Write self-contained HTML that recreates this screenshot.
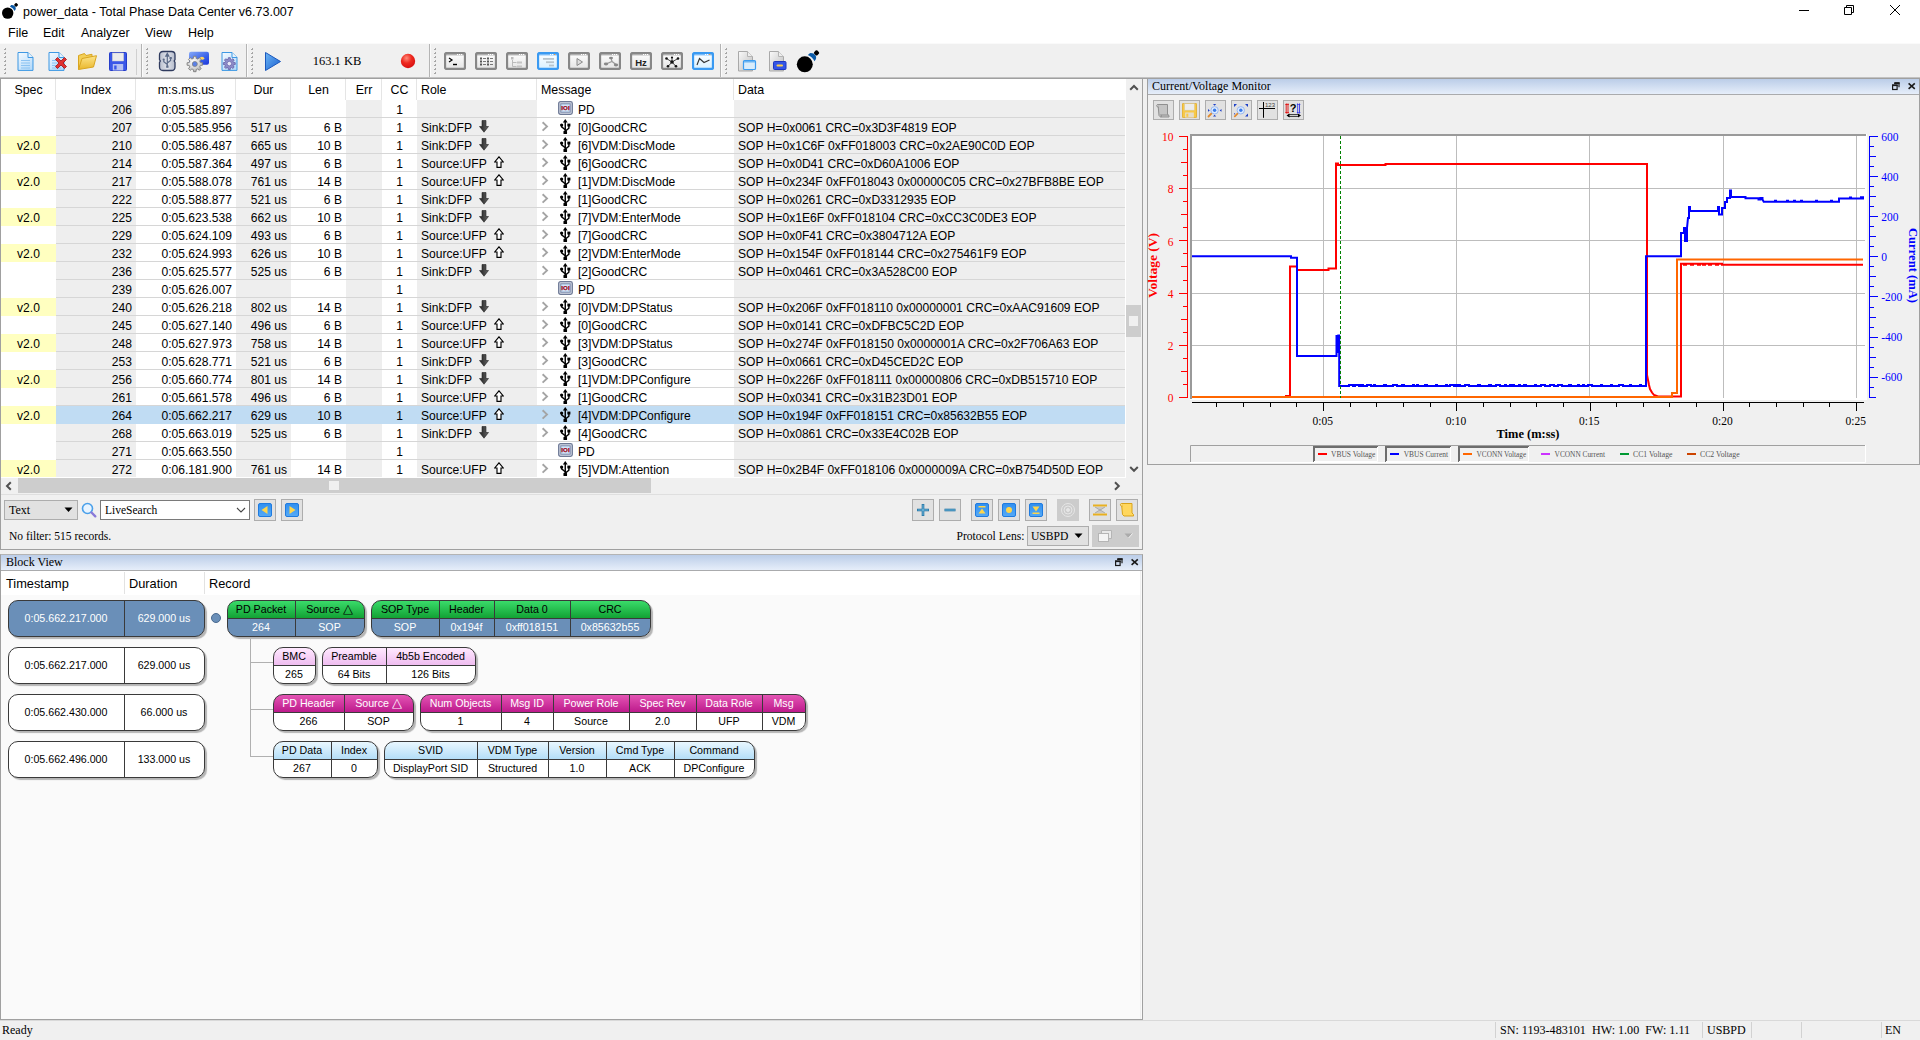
<!DOCTYPE html><html><head><meta charset="utf-8"><title>power_data - Total Phase Data Center v6.73.007</title><style>
html,body{margin:0;padding:0}
body{width:1920px;height:1040px;background:#f0f0f0;position:relative;overflow:hidden;font-family:"Liberation Sans",sans-serif;font-size:12px;color:#000}
div,span,svg{position:absolute;box-sizing:border-box}
.ui{font-family:"Liberation Sans",sans-serif;font-size:12.5px;white-space:nowrap}
.sf{font-family:"Liberation Serif",serif;font-size:12px;white-space:nowrap}
.t{white-space:nowrap;line-height:18px;height:18px;font-size:12.08px;margin-top:1px}
.r{text-align:right}
.c{text-align:center}
.hd{white-space:nowrap;line-height:20px;height:20px;font-size:12.4px;top:80px}
.hs{top:79px;width:1px;height:21px;background:#e5e5e5}
.ln{height:1px;background:#d6d6d6;left:56px;width:1069px}
.bk{font-size:10.67px;white-space:nowrap;text-align:center;line-height:17px;height:18px}
.btn{border:1px solid #adadad;background:#e1e1e1}
</style></head><body><div style="left:0;top:0;width:1920px;height:43px;background:#fff"></div><svg style="left:0px;top:0px" width="20.0" height="22.0" viewBox="0 0 20 22"><path d="M9.900 6.400L11.300 5.100Q14 4.800 15.400 6.800Q16.600 8.800 14.600 10.900Q13.500 8 9.900 6.400Z" fill="#0a5aa8"/><rect x="14.500" y="3.300" width="3.200" height="3.200" rx=".9" transform="rotate(45 16.100 4.900)" fill="#000"/><circle cx="7.700" cy="13.100" r="5.700" fill="#000"/></svg><div class="ui" style="left:23px;top:4px;line-height:16px">power_data - Total Phase Data Center v6.73.007</div><svg style="left:1795px;top:0" width="120" height="22" viewBox="0 0 120 22" fill="none" stroke="#000" stroke-width="1"><path d="M4 10.5h10"/><path d="M49.5 7.5h7v7h-7z M51.5 7.5v-2h7v7h-2"/><path d="M95 5l10 10M105 5l-10 10"/></svg><div class="ui" style="left:8px;top:25px;line-height:16px">File</div><div class="ui" style="left:43px;top:25px;line-height:16px">Edit</div><div class="ui" style="left:81px;top:25px;line-height:16px">Analyzer</div><div class="ui" style="left:145px;top:25px;line-height:16px">View</div><div class="ui" style="left:188px;top:25px;line-height:16px">Help</div><div style="left:0;top:43px;width:1920px;height:34px;background:#f0f0f0;border-top:1px solid #fafafa"></div><div style="left:0;top:77px;width:1920px;height:1px;background:#c2c2c2"></div><div style="left:0;top:78px;width:1920px;height:1px;background:#a0a0a0"></div><div style="left:4px;top:48px;width:2px;height:2px;background:#a6a6a6"></div><div style="left:4px;top:48px;width:1px;height:1px;background:#f6f6f6"></div><div style="left:4px;top:52px;width:2px;height:2px;background:#a6a6a6"></div><div style="left:4px;top:52px;width:1px;height:1px;background:#f6f6f6"></div><div style="left:4px;top:56px;width:2px;height:2px;background:#a6a6a6"></div><div style="left:4px;top:56px;width:1px;height:1px;background:#f6f6f6"></div><div style="left:4px;top:60px;width:2px;height:2px;background:#a6a6a6"></div><div style="left:4px;top:60px;width:1px;height:1px;background:#f6f6f6"></div><div style="left:4px;top:64px;width:2px;height:2px;background:#a6a6a6"></div><div style="left:4px;top:64px;width:1px;height:1px;background:#f6f6f6"></div><div style="left:4px;top:68px;width:2px;height:2px;background:#a6a6a6"></div><div style="left:4px;top:68px;width:1px;height:1px;background:#f6f6f6"></div><div style="left:4px;top:72px;width:2px;height:2px;background:#a6a6a6"></div><div style="left:4px;top:72px;width:1px;height:1px;background:#f6f6f6"></div><div style="left:146px;top:48px;width:2px;height:2px;background:#a6a6a6"></div><div style="left:146px;top:48px;width:1px;height:1px;background:#f6f6f6"></div><div style="left:146px;top:52px;width:2px;height:2px;background:#a6a6a6"></div><div style="left:146px;top:52px;width:1px;height:1px;background:#f6f6f6"></div><div style="left:146px;top:56px;width:2px;height:2px;background:#a6a6a6"></div><div style="left:146px;top:56px;width:1px;height:1px;background:#f6f6f6"></div><div style="left:146px;top:60px;width:2px;height:2px;background:#a6a6a6"></div><div style="left:146px;top:60px;width:1px;height:1px;background:#f6f6f6"></div><div style="left:146px;top:64px;width:2px;height:2px;background:#a6a6a6"></div><div style="left:146px;top:64px;width:1px;height:1px;background:#f6f6f6"></div><div style="left:146px;top:68px;width:2px;height:2px;background:#a6a6a6"></div><div style="left:146px;top:68px;width:1px;height:1px;background:#f6f6f6"></div><div style="left:146px;top:72px;width:2px;height:2px;background:#a6a6a6"></div><div style="left:146px;top:72px;width:1px;height:1px;background:#f6f6f6"></div><div style="left:251px;top:48px;width:2px;height:2px;background:#a6a6a6"></div><div style="left:251px;top:48px;width:1px;height:1px;background:#f6f6f6"></div><div style="left:251px;top:52px;width:2px;height:2px;background:#a6a6a6"></div><div style="left:251px;top:52px;width:1px;height:1px;background:#f6f6f6"></div><div style="left:251px;top:56px;width:2px;height:2px;background:#a6a6a6"></div><div style="left:251px;top:56px;width:1px;height:1px;background:#f6f6f6"></div><div style="left:251px;top:60px;width:2px;height:2px;background:#a6a6a6"></div><div style="left:251px;top:60px;width:1px;height:1px;background:#f6f6f6"></div><div style="left:251px;top:64px;width:2px;height:2px;background:#a6a6a6"></div><div style="left:251px;top:64px;width:1px;height:1px;background:#f6f6f6"></div><div style="left:251px;top:68px;width:2px;height:2px;background:#a6a6a6"></div><div style="left:251px;top:68px;width:1px;height:1px;background:#f6f6f6"></div><div style="left:251px;top:72px;width:2px;height:2px;background:#a6a6a6"></div><div style="left:251px;top:72px;width:1px;height:1px;background:#f6f6f6"></div><div style="left:434px;top:48px;width:2px;height:2px;background:#a6a6a6"></div><div style="left:434px;top:48px;width:1px;height:1px;background:#f6f6f6"></div><div style="left:434px;top:52px;width:2px;height:2px;background:#a6a6a6"></div><div style="left:434px;top:52px;width:1px;height:1px;background:#f6f6f6"></div><div style="left:434px;top:56px;width:2px;height:2px;background:#a6a6a6"></div><div style="left:434px;top:56px;width:1px;height:1px;background:#f6f6f6"></div><div style="left:434px;top:60px;width:2px;height:2px;background:#a6a6a6"></div><div style="left:434px;top:60px;width:1px;height:1px;background:#f6f6f6"></div><div style="left:434px;top:64px;width:2px;height:2px;background:#a6a6a6"></div><div style="left:434px;top:64px;width:1px;height:1px;background:#f6f6f6"></div><div style="left:434px;top:68px;width:2px;height:2px;background:#a6a6a6"></div><div style="left:434px;top:68px;width:1px;height:1px;background:#f6f6f6"></div><div style="left:434px;top:72px;width:2px;height:2px;background:#a6a6a6"></div><div style="left:434px;top:72px;width:1px;height:1px;background:#f6f6f6"></div><div style="left:725px;top:48px;width:2px;height:2px;background:#a6a6a6"></div><div style="left:725px;top:48px;width:1px;height:1px;background:#f6f6f6"></div><div style="left:725px;top:52px;width:2px;height:2px;background:#a6a6a6"></div><div style="left:725px;top:52px;width:1px;height:1px;background:#f6f6f6"></div><div style="left:725px;top:56px;width:2px;height:2px;background:#a6a6a6"></div><div style="left:725px;top:56px;width:1px;height:1px;background:#f6f6f6"></div><div style="left:725px;top:60px;width:2px;height:2px;background:#a6a6a6"></div><div style="left:725px;top:60px;width:1px;height:1px;background:#f6f6f6"></div><div style="left:725px;top:64px;width:2px;height:2px;background:#a6a6a6"></div><div style="left:725px;top:64px;width:1px;height:1px;background:#f6f6f6"></div><div style="left:725px;top:68px;width:2px;height:2px;background:#a6a6a6"></div><div style="left:725px;top:68px;width:1px;height:1px;background:#f6f6f6"></div><div style="left:725px;top:72px;width:2px;height:2px;background:#a6a6a6"></div><div style="left:725px;top:72px;width:1px;height:1px;background:#f6f6f6"></div><div style="left:141px;top:44px;width:1px;height:33px;background:#b4b4b4"></div><div style="left:142px;top:44px;width:1px;height:33px;background:#fbfbfb"></div><div style="left:246px;top:44px;width:1px;height:33px;background:#b4b4b4"></div><div style="left:247px;top:44px;width:1px;height:33px;background:#fbfbfb"></div><div style="left:429px;top:44px;width:1px;height:33px;background:#b4b4b4"></div><div style="left:430px;top:44px;width:1px;height:33px;background:#fbfbfb"></div><div style="left:720px;top:44px;width:1px;height:33px;background:#b4b4b4"></div><div style="left:721px;top:44px;width:1px;height:33px;background:#fbfbfb"></div><div style="left:136px;top:49px;width:1px;height:26px;background:#d0d0d0"></div><svg style="left:17px;top:52px" width="17" height="19.4" viewBox="0 0 17 19.4"><defs><linearGradient id="d1" x1="0" y1="0" x2="0.6" y2="1"><stop offset="0" stop-color="#f4faff"/><stop offset="1" stop-color="#b9dcfa"/></linearGradient></defs><path d="M1 .5h10l5 5v12.899999999999999h-15z" fill="url(#d1)" stroke="#3b97e3" stroke-width="1"/><path d="M11 .5v5h5" fill="#e8f3fd" stroke="#3b97e3" stroke-width="1"/><path d="M4 8.5h9" stroke="#8cc3f2" stroke-width="1"/><path d="M4 11.0h9" stroke="#8cc3f2" stroke-width="1"/><path d="M4 13.5h9" stroke="#8cc3f2" stroke-width="1"/><path d="M4 16.0h9" stroke="#8cc3f2" stroke-width="1"/></svg><svg style="left:48px;top:52px" width="17" height="19.4" viewBox="0 0 17 19.4"><defs><linearGradient id="d2" x1="0" y1="0" x2="0.6" y2="1"><stop offset="0" stop-color="#f4faff"/><stop offset="1" stop-color="#b9dcfa"/></linearGradient></defs><path d="M1 .5h10l5 5v12.899999999999999h-15z" fill="url(#d2)" stroke="#3b97e3" stroke-width="1"/><path d="M11 .5v5h5" fill="#e8f3fd" stroke="#3b97e3" stroke-width="1"/><path d="M4 8.5h9" stroke="#8cc3f2" stroke-width="1"/><path d="M4 11.0h9" stroke="#8cc3f2" stroke-width="1"/><path d="M4 13.5h9" stroke="#8cc3f2" stroke-width="1"/><path d="M4 16.0h9" stroke="#8cc3f2" stroke-width="1"/></svg><svg style="left:53.300px;top:55px" width="16" height="16" viewBox="0 0 16 16"><path d="M2.5 4.5l2-2L8 6l3.5-3.5 2 2L10 8l3.500 3.500-2 2L8 10l-3.500 3.500-2-2L6 8z" fill="#e03030" stroke="#a01010" stroke-width=".8"/></svg><svg style="left:77px;top:51px" width="21" height="21" viewBox="0 0 21 21"><defs><linearGradient id="fo" x1="0" y1="0" x2="0" y2="1"><stop offset="0" stop-color="#fde58a"/><stop offset="1" stop-color="#e9b62c"/></linearGradient></defs><path d="M1.500 18.500V4.500l6-2 1.500 2 6-1.200v3" fill="#f3cf57" stroke="#d9a520" stroke-width="1"/><path d="M1.500 18.500L5 7.500l14.500-2.800L16.500 16z" fill="url(#fo)" stroke="#d9a520" stroke-width="1"/></svg><svg style="left:109px;top:52px" width="18" height="19" viewBox="0 0 19 19" preserveAspectRatio="none"><rect x=".5" y=".5" width="18" height="18" rx="1" fill="#3a57e8" stroke="#2038c8" stroke-width="1"/><rect x="3.500" y="1" width="12" height="8" fill="#ececec" stroke="#c9c9c9" stroke-width=".5"/><rect x="4" y="12" width="11" height="6.500" fill="#dfe3f5" opacity=".75"/><rect x="5.500" y="13.500" width="2.500" height="4" fill="#3a57e8"/></svg><svg style="left:157.500px;top:50px" width="20" height="22" viewBox="0 0 20 22"><defs><linearGradient id="ud" x1="0" y1="0" x2="1" y2="0"><stop offset="0" stop-color="#b9bfce"/><stop offset=".5" stop-color="#dfe2ea"/><stop offset="1" stop-color="#b4bbcb"/></linearGradient></defs><path d="M5 1.500h8.500q3.500 0 3.500 3.500v4.500l-.8 1.500.8 1.500v4.500q0 3.500-3.500 3.500H5q-3.500 0-3.500-3.500v-4.500l.8-1.500-.8-1.500V5q0-3.500 3.500-3.500z" fill="url(#ud)" stroke="#2f3b5e" stroke-width="1.300"/><path d="M9.300 4.500v12M9.300 3.300l-1.500 2.800h3zM9.300 14.500l-3.500-2.700v-1.600M9.300 13l3.300-2.600V8.700" fill="none" stroke="#5c6b88" stroke-width="1.200"/><circle cx="5.700" cy="9.600" r="1.100" fill="#5c6b88"/><rect x="11.500" y="7" width="2.300" height="2" fill="#5c6b88"/><rect x="8.200" y="15.500" width="2.300" height="2.300" fill="#5c6b88"/></svg><svg style="left:186px;top:50px" width="25" height="24" viewBox="0 0 25 24"><defs><linearGradient id="mo" x1="0" y1="0" x2="1" y2="1"><stop offset="0" stop-color="#86a9f7"/><stop offset=".6" stop-color="#3a62ea"/><stop offset="1" stop-color="#1c36d8"/></linearGradient><radialGradient id="gg" cx=".4" cy=".35" r=".75"><stop offset="0" stop-color="#ffffff"/><stop offset=".6" stop-color="#d2d2d2"/><stop offset="1" stop-color="#9c9c9c"/></radialGradient></defs><rect x="3" y="1.800" width="20" height="13" rx="2" fill="url(#mo)"/><ellipse cx="16" cy="8.300" rx="2.200" ry="1.500" fill="#ffd45e"/><path d="M7.37 8.41 L7.56 6.30 L10.04 6.30 L10.23 8.41 L11.74 9.04 L13.37 7.68 L15.12 9.43 L13.76 11.06 L14.39 12.57 L16.50 12.76 L16.50 15.24 L14.39 15.43 L13.76 16.94 L15.12 18.57 L13.37 20.32 L11.74 18.96 L10.23 19.59 L10.04 21.70 L7.56 21.70 L7.37 19.59 L5.86 18.96 L4.23 20.32 L2.48 18.57 L3.84 16.94 L3.21 15.43 L1.10 15.24 L1.10 12.76 L3.21 12.57 L3.84 11.06 L2.48 9.43 L4.23 7.68 L5.86 9.04Z" fill="url(#gg)" stroke="#7f7f7f" stroke-width=".9" stroke-linejoin="round"/><circle cx="8.8" cy="14" r="2.5" fill="#5a80e8" stroke="#7f7f7f" stroke-width=".8"/></svg><svg style="left:221px;top:52px" width="17" height="19.4" viewBox="0 0 17 19.4"><defs><linearGradient id="d3" x1="0" y1="0" x2="0.6" y2="1"><stop offset="0" stop-color="#f4faff"/><stop offset="1" stop-color="#b9dcfa"/></linearGradient></defs><path d="M1 .5h10l5 5v12.899999999999999h-15z" fill="url(#d3)" stroke="#3b97e3" stroke-width="1"/><path d="M11 .5v5h5" fill="#e8f3fd" stroke="#3b97e3" stroke-width="1"/></svg><svg style="left:221px;top:55px" width="17" height="17" viewBox="0 0 17 17"><path d="M7.20 4.30 L7.34 2.68 L9.26 2.68 L9.40 4.30 L10.57 4.78 L11.81 3.74 L13.16 5.09 L12.12 6.33 L12.60 7.50 L14.22 7.64 L14.22 9.56 L12.60 9.70 L12.12 10.87 L13.16 12.11 L11.81 13.46 L10.57 12.42 L9.40 12.90 L9.26 14.52 L7.34 14.52 L7.20 12.90 L6.03 12.42 L4.79 13.46 L3.44 12.11 L4.48 10.87 L4.00 9.70 L2.38 9.56 L2.38 7.64 L4.00 7.50 L4.48 6.33 L3.44 5.09 L4.79 3.74 L6.03 4.78Z" fill="#8f8cc8" stroke="#6a67ae" stroke-width=".9" stroke-linejoin="round"/><circle cx="8.3" cy="8.6" r="2.3" fill="#e8e8f8" stroke="#6a67ae" stroke-width=".8"/></svg><svg style="left:264px;top:51px" width="18" height="21" viewBox="0 0 18 21"><defs><linearGradient id="pl" x1="0" y1="0" x2="1" y2="1"><stop offset="0" stop-color="#6db6f5"/><stop offset="1" stop-color="#1a5fd0"/></linearGradient></defs><path d="M1.500 1.500L16.500 10.500L1.500 19.500Z" fill="url(#pl)" stroke="#1b58bd" stroke-width="1" stroke-linejoin="round"/></svg><div class="sf" style="left:292px;top:53px;width:90px;text-align:center;line-height:16px;font-size:12.5px">163.1 KB</div><svg style="left:400px;top:53px" width="16" height="16" viewBox="0 0 16 16"><defs><radialGradient id="rc" cx=".4" cy=".3" r=".7"><stop offset="0" stop-color="#ff8a7a"/><stop offset=".5" stop-color="#ee2a20"/><stop offset="1" stop-color="#d81010"/></radialGradient></defs><circle cx="8" cy="8" r="7.200" fill="url(#rc)"/></svg><svg style="left:444px;top:52px" width="22" height="18" viewBox="0 0 22 18"><defs><linearGradient id="w1" x1="0" y1="0" x2="0" y2="1"><stop offset="0" stop-color="#ffffff"/><stop offset="1" stop-color="#e4e4e4"/></linearGradient></defs><rect x="1" y="1" width="20" height="16" rx="1.800" fill="url(#w1)" stroke="#878787" stroke-width="2.300"/><rect x="2" y="2" width="18" height="1.500" fill="#878787" opacity=".55"/><rect x="13" y="2" width="1.200" height="1" fill="#fff"/><rect x="15" y="2" width="1.200" height="1" fill="#fff"/><rect x="17" y="2" width="1.200" height="1" fill="#fff"/><path d="M5 6l3 2-3 2" fill="none" stroke="#000" stroke-width="1.200"/><path d="M9 12.500h4" stroke="#000" stroke-width="1.400"/></svg><svg style="left:475px;top:52px" width="22" height="18" viewBox="0 0 22 18"><defs><linearGradient id="w2" x1="0" y1="0" x2="0" y2="1"><stop offset="0" stop-color="#ffffff"/><stop offset="1" stop-color="#e4e4e4"/></linearGradient></defs><rect x="1" y="1" width="20" height="16" rx="1.800" fill="url(#w2)" stroke="#878787" stroke-width="2.300"/><rect x="2" y="2" width="18" height="1.500" fill="#878787" opacity=".55"/><rect x="13" y="2" width="1.200" height="1" fill="#fff"/><rect x="15" y="2" width="1.200" height="1" fill="#fff"/><rect x="17" y="2" width="1.200" height="1" fill="#fff"/><rect x="5" y="5.5" width="2" height="2" fill="#555"/><rect x="8" y="6.0" width="3" height="1" fill="#777"/><rect x="12" y="5.5" width="2" height="2" fill="#555"/><rect x="15" y="6.0" width="3" height="1" fill="#777"/><rect x="5" y="8.5" width="2" height="2" fill="#555"/><rect x="8" y="9.0" width="3" height="1" fill="#777"/><rect x="12" y="8.5" width="2" height="2" fill="#555"/><rect x="15" y="9.0" width="3" height="1" fill="#777"/><rect x="5" y="11.5" width="2" height="2" fill="#555"/><rect x="8" y="12.0" width="3" height="1" fill="#777"/><rect x="12" y="11.5" width="2" height="2" fill="#555"/><rect x="15" y="12.0" width="3" height="1" fill="#777"/></svg><svg style="left:506px;top:52px" width="22" height="18" viewBox="0 0 22 18"><defs><linearGradient id="w3" x1="0" y1="0" x2="0" y2="1"><stop offset="0" stop-color="#ffffff"/><stop offset="1" stop-color="#e4e4e4"/></linearGradient></defs><rect x="1" y="1" width="20" height="16" rx="1.800" fill="url(#w3)" stroke="#878787" stroke-width="2.300"/><rect x="2" y="2" width="18" height="1.500" fill="#878787" opacity=".55"/><rect x="13" y="2" width="1.200" height="1" fill="#fff"/><rect x="15" y="2" width="1.200" height="1" fill="#fff"/><rect x="17" y="2" width="1.200" height="1" fill="#fff"/><rect x="5" y="5" width="2.500" height="2.500" fill="#bbb"/><path d="M6.500 8v6.500h4M6.500 10.500h4" fill="none" stroke="#bbb" stroke-width="1"/><rect x="11" y="9.500" width="5" height="2" fill="#c4c4c4"/><rect x="11" y="13.500" width="5" height="2" fill="#c4c4c4"/></svg><svg style="left:537px;top:52px" width="22" height="18" viewBox="0 0 22 18"><defs><linearGradient id="w4" x1="0" y1="0" x2="0" y2="1"><stop offset="0" stop-color="#ffffff"/><stop offset="1" stop-color="#d8f0ff"/></linearGradient></defs><rect x="1" y="1" width="20" height="16" rx="1.800" fill="url(#w4)" stroke="#3a9af2" stroke-width="2.300"/><rect x="2" y="2" width="18" height="1.500" fill="#3a9af2" opacity=".55"/><rect x="13" y="2" width="1.200" height="1" fill="#fff"/><rect x="15" y="2" width="1.200" height="1" fill="#fff"/><rect x="17" y="2" width="1.200" height="1" fill="#ff9a30"/><rect x="6" y="6" width="11" height="1.800" fill="#b8c4cc"/><rect x="9" y="9.300" width="8" height="1.800" fill="#b8c4cc"/><rect x="12" y="12.600" width="5" height="1.800" fill="#b8c4cc"/></svg><svg style="left:568px;top:52px" width="22" height="18" viewBox="0 0 22 18"><defs><linearGradient id="w5" x1="0" y1="0" x2="0" y2="1"><stop offset="0" stop-color="#ffffff"/><stop offset="1" stop-color="#e4e4e4"/></linearGradient></defs><rect x="1" y="1" width="20" height="16" rx="1.800" fill="url(#w5)" stroke="#878787" stroke-width="2.300"/><rect x="2" y="2" width="18" height="1.500" fill="#878787" opacity=".55"/><rect x="13" y="2" width="1.200" height="1" fill="#fff"/><rect x="15" y="2" width="1.200" height="1" fill="#fff"/><rect x="17" y="2" width="1.200" height="1" fill="#fff"/><path d="M9 6.500l5.500 3.500-5.500 3.500z" fill="#ddd" stroke="#8a8a8a" stroke-width="1"/></svg><svg style="left:599px;top:52px" width="22" height="18" viewBox="0 0 22 18"><defs><linearGradient id="w6" x1="0" y1="0" x2="0" y2="1"><stop offset="0" stop-color="#ffffff"/><stop offset="1" stop-color="#e4e4e4"/></linearGradient></defs><rect x="1" y="1" width="20" height="16" rx="1.800" fill="url(#w6)" stroke="#878787" stroke-width="2.300"/><rect x="2" y="2" width="18" height="1.500" fill="#878787" opacity=".55"/><rect x="13" y="2" width="1.200" height="1" fill="#fff"/><rect x="15" y="2" width="1.200" height="1" fill="#fff"/><rect x="17" y="2" width="1.200" height="1" fill="#fff"/><path d="M7 12l6-2.500 4 3M13 9.500l-1-3.500" fill="none" stroke="#999" stroke-width="1.200"/><ellipse cx="7" cy="12" rx="2.200" ry="1.400" fill="#888"/><ellipse cx="17" cy="13" rx="2.200" ry="1.400" fill="#888"/><ellipse cx="12" cy="6" rx="2" ry="1.300" fill="#888"/></svg><svg style="left:630px;top:52px" width="22" height="18" viewBox="0 0 22 18"><defs><linearGradient id="w7" x1="0" y1="0" x2="0" y2="1"><stop offset="0" stop-color="#ffffff"/><stop offset="1" stop-color="#e4e4e4"/></linearGradient></defs><rect x="1" y="1" width="20" height="16" rx="1.800" fill="url(#w7)" stroke="#878787" stroke-width="2.300"/><rect x="2" y="2" width="18" height="1.500" fill="#878787" opacity=".55"/><rect x="13" y="2" width="1.200" height="1" fill="#fff"/><rect x="15" y="2" width="1.200" height="1" fill="#fff"/><rect x="17" y="2" width="1.200" height="1" fill="#fff"/><text x="11" y="13.500" font-family="Liberation Sans,sans-serif" font-weight="bold" font-size="9.500" text-anchor="middle" fill="#222">Hz</text></svg><svg style="left:661px;top:52px" width="22" height="18" viewBox="0 0 22 18"><defs><linearGradient id="w8" x1="0" y1="0" x2="0" y2="1"><stop offset="0" stop-color="#ffffff"/><stop offset="1" stop-color="#e4e4e4"/></linearGradient></defs><rect x="1" y="1" width="20" height="16" rx="1.800" fill="url(#w8)" stroke="#878787" stroke-width="2.300"/><rect x="2" y="2" width="18" height="1.500" fill="#878787" opacity=".55"/><rect x="13" y="2" width="1.200" height="1" fill="#fff"/><rect x="15" y="2" width="1.200" height="1" fill="#fff"/><rect x="17" y="2" width="1.200" height="1" fill="#fff"/><path d="M11 10L5.500 6.500M11 10l6-3.500M11 10l-4 4.500M11 10l4 4.500M11 10V5.500" stroke="#444" stroke-width="1"/><circle cx="11" cy="10" r="1.800" fill="#111"/><circle cx="5.500" cy="6.500" r="1.300" fill="#111"/><circle cx="17" cy="6.500" r="1.300" fill="#111"/><circle cx="7" cy="14.200" r="1.300" fill="#111"/><circle cx="15" cy="14.200" r="1.300" fill="#111"/><circle cx="11" cy="5.500" r="1.100" fill="#111"/></svg><svg style="left:692px;top:52px" width="22" height="18" viewBox="0 0 22 18"><defs><linearGradient id="w9" x1="0" y1="0" x2="0" y2="1"><stop offset="0" stop-color="#ffffff"/><stop offset="1" stop-color="#d8f0ff"/></linearGradient></defs><rect x="1" y="1" width="20" height="16" rx="1.800" fill="url(#w9)" stroke="#3a9af2" stroke-width="2.300"/><rect x="2" y="2" width="18" height="1.500" fill="#3a9af2" opacity=".55"/><rect x="13" y="2" width="1.200" height="1" fill="#fff"/><rect x="15" y="2" width="1.200" height="1" fill="#fff"/><rect x="17" y="2" width="1.200" height="1" fill="#ff9a30"/><path d="M5 13l2.500-6.500 4.500 4 5.500-2.500" fill="none" stroke="#333" stroke-width="1.100"/></svg><svg style="left:738px;top:51px" width="20" height="21" viewBox="0 0 20 21"><defs><linearGradient id="g1" x1="0" y1="0" x2="1" y2="1"><stop offset="0" stop-color="#fafafa"/><stop offset="1" stop-color="#bdbdbd"/></linearGradient></defs><path d="M.5 .5h9l5 5v14.500h-14z" fill="url(#g1)" stroke="#a9a9a9" stroke-width="1"/><path d="M9.500 .5v5h5" fill="#eee" stroke="#b5b5b5"/><rect x="5.500" y="9.500" width="12" height="9" rx="1" fill="#d9ecfb" stroke="#3d9cf0" stroke-width="1.200"/><rect x="6" y="10" width="11" height="1.500" fill="#6ab4f3"/></svg><svg style="left:769px;top:51px" width="20" height="21" viewBox="0 0 20 21"><defs><linearGradient id="g2" x1="0" y1="0" x2="1" y2="1"><stop offset="0" stop-color="#fafafa"/><stop offset="1" stop-color="#bdbdbd"/></linearGradient></defs><path d="M.5 .5h9l5 5v14.500h-14z" fill="url(#g2)" stroke="#a9a9a9" stroke-width="1"/><path d="M9.500 .5v5h5" fill="#eee" stroke="#b5b5b5"/><rect x="4.500" y="10.500" width="12.500" height="8" rx="1" fill="#3556e6" stroke="#1f38c0" stroke-width="1"/><rect x="7.500" y="13.500" width="6.500" height="2" rx="1" fill="#ffd24a"/></svg><svg style="left:793.8px;top:45.7px" width="28.0" height="30.799999999999997" viewBox="0 0 20 22"><path d="M9.900 6.400L11.300 5.100Q14 4.800 15.400 6.800Q16.600 8.800 14.600 10.900Q13.500 8 9.900 6.400Z" fill="#0a5aa8"/><rect x="14.500" y="3.300" width="3.200" height="3.200" rx=".9" transform="rotate(45 16.100 4.900)" fill="#000"/><circle cx="7.700" cy="13.100" r="5.700" fill="#000"/></svg><div style="left:0;top:79px;width:1143px;height:471px;background:#fff;border-left:1px solid #a0a0a0;border-right:1px solid #a0a0a0;border-bottom:1px solid #a0a0a0"></div><div class="hd c" style="left:1px;width:55px">Spec</div><div class="hd c" style="left:56px;width:80px">Index</div><div class="hs" style="left:55px"></div><div class="hd c" style="left:136px;width:100px">m:s.ms.us</div><div class="hs" style="left:135px"></div><div class="hd c" style="left:236px;width:55px">Dur</div><div class="hs" style="left:235px"></div><div class="hd c" style="left:291px;width:55px">Len</div><div class="hs" style="left:290px"></div><div class="hd c" style="left:346px;width:36px">Err</div><div class="hs" style="left:345px"></div><div class="hd c" style="left:382px;width:35px">CC</div><div class="hs" style="left:381px"></div><div class="hd" style="left:421px">Role</div><div class="hs" style="left:416px"></div><div class="hd" style="left:541px">Message</div><div class="hs" style="left:536px"></div><div class="hd" style="left:738px">Data</div><div class="hs" style="left:733px"></div><div style="left:56px;top:100px;width:80px;height:378px;background:#eeeeee"></div><div style="left:236px;top:100px;width:55px;height:378px;background:#eeeeee"></div><div style="left:346px;top:100px;width:36px;height:378px;background:#eeeeee"></div><div style="left:417px;top:100px;width:120px;height:378px;background:#eeeeee"></div><div style="left:734px;top:100px;width:391px;height:378px;background:#eeeeee"></div><div class="t r" style="left:56px;top:100px;width:76px">206</div><div class="t r" style="left:136px;top:100px;width:96px">0:05.585.897</div><div class="t c" style="left:382px;top:100px;width:35px">1</div><svg style="left:558px;top:101px" width="15" height="14" viewBox="0 0 15 14"><rect x=".7" y=".7" width="13.600" height="12.600" rx="1.800" fill="#d9deea" stroke="#6e7a96" stroke-width="1.300"/><rect x="2.800" y="2.800" width="9.400" height="8.400" fill="#cfe6fb" stroke="#7b88a8" stroke-width="1"/><text x="7.500" y="9.300" font-family="Liberation Sans,sans-serif" font-weight="bold" font-size="6.200" text-anchor="middle" fill="#a00010" stroke="#a00010" stroke-width=".25">IOI</text></svg><div class="t" style="left:578px;top:100px">PD</div><div class="ln" style="top:117px"></div><div class="t r" style="left:56px;top:118px;width:76px">207</div><div class="t r" style="left:136px;top:118px;width:96px">0:05.585.956</div><div class="t r" style="left:236px;top:118px;width:51px">517 us</div><div class="t r" style="left:291px;top:118px;width:51px">6 B</div><div class="t c" style="left:382px;top:118px;width:35px">1</div><div class="t" style="left:421px;top:118px">Sink:DFP</div><svg style="left:479px;top:120px" width="10" height="13" viewBox="0 0 10 13"><defs><linearGradient id="da1" x1="0" y1="0" x2="1" y2="0"><stop offset="0" stop-color="#222"/><stop offset="1" stop-color="#666"/></linearGradient></defs><path d="M3 .5h4v6h2.500L5 12.200.5 6.500H3z" fill="url(#da1)" stroke="#222" stroke-width=".6"/></svg><svg style="left:541px;top:121px" width="8" height="11" viewBox="0 0 8 11"><path d="M1.600 1.200l4.400 4.200-4.400 4.200" fill="none" stroke="#a4a4a4" stroke-width="1.900"/></svg><svg style="left:560px;top:119px" width="10.500" height="15.300" viewBox="0 0 11 16"><path d="M5.500 0L3 3.600h5z" fill="#000"/><path d="M5.500 3v10.500" stroke="#000" stroke-width="1.500"/><path d="M5.500 11.200L1.700 8.300V6.500M5.500 12.700l3.800-3V7" fill="none" stroke="#000" stroke-width="1.500"/><circle cx="1.700" cy="6.300" r="1.700" fill="#000"/><rect x="7.700" y="4.800" width="3.200" height="3" fill="#000"/><rect x="3.600" y="12.300" width="3.800" height="3.700" rx="1" fill="#000"/></svg><div class="t" style="left:578px;top:118px">[0]GoodCRC</div><div class="t" style="left:738px;top:118px">SOP H=0x0061 CRC=0x3D3F4819 EOP</div><div class="ln" style="top:135px"></div><div style="left:1px;top:136px;width:55px;height:18px;background:#ffffc0"></div><div class="t c" style="left:1px;top:136px;width:55px">v2.0</div><div class="t r" style="left:56px;top:136px;width:76px">210</div><div class="t r" style="left:136px;top:136px;width:96px">0:05.586.487</div><div class="t r" style="left:236px;top:136px;width:51px">665 us</div><div class="t r" style="left:291px;top:136px;width:51px">10 B</div><div class="t c" style="left:382px;top:136px;width:35px">1</div><div class="t" style="left:421px;top:136px">Sink:DFP</div><svg style="left:479px;top:138px" width="10" height="13" viewBox="0 0 10 13"><defs><linearGradient id="da2" x1="0" y1="0" x2="1" y2="0"><stop offset="0" stop-color="#222"/><stop offset="1" stop-color="#666"/></linearGradient></defs><path d="M3 .5h4v6h2.500L5 12.200.5 6.500H3z" fill="url(#da2)" stroke="#222" stroke-width=".6"/></svg><svg style="left:541px;top:139px" width="8" height="11" viewBox="0 0 8 11"><path d="M1.600 1.200l4.400 4.200-4.400 4.200" fill="none" stroke="#a4a4a4" stroke-width="1.900"/></svg><svg style="left:560px;top:137px" width="10.500" height="15.300" viewBox="0 0 11 16"><path d="M5.500 0L3 3.600h5z" fill="#000"/><path d="M5.500 3v10.500" stroke="#000" stroke-width="1.500"/><path d="M5.500 11.200L1.700 8.300V6.500M5.500 12.700l3.800-3V7" fill="none" stroke="#000" stroke-width="1.500"/><circle cx="1.700" cy="6.300" r="1.700" fill="#000"/><rect x="7.700" y="4.800" width="3.200" height="3" fill="#000"/><rect x="3.600" y="12.300" width="3.800" height="3.700" rx="1" fill="#000"/></svg><div class="t" style="left:578px;top:136px">[6]VDM:DiscMode</div><div class="t" style="left:738px;top:136px">SOP H=0x1C6F 0xFF018003 CRC=0x2AE90C0D EOP</div><div class="ln" style="top:153px"></div><div class="t r" style="left:56px;top:154px;width:76px">214</div><div class="t r" style="left:136px;top:154px;width:96px">0:05.587.364</div><div class="t r" style="left:236px;top:154px;width:51px">497 us</div><div class="t r" style="left:291px;top:154px;width:51px">6 B</div><div class="t c" style="left:382px;top:154px;width:35px">1</div><div class="t" style="left:421px;top:154px">Source:UFP</div><svg style="left:494px;top:156px" width="10" height="13" viewBox="0 0 10 13"><path d="M5 .8L9.300 6H7v5.300H3V6H.7z" fill="#fff" stroke="#000" stroke-width="1.150"/></svg><svg style="left:541px;top:157px" width="8" height="11" viewBox="0 0 8 11"><path d="M1.600 1.200l4.400 4.200-4.400 4.200" fill="none" stroke="#a4a4a4" stroke-width="1.900"/></svg><svg style="left:560px;top:155px" width="10.500" height="15.300" viewBox="0 0 11 16"><path d="M5.500 0L3 3.600h5z" fill="#000"/><path d="M5.500 3v10.500" stroke="#000" stroke-width="1.500"/><path d="M5.500 11.200L1.700 8.300V6.500M5.500 12.700l3.800-3V7" fill="none" stroke="#000" stroke-width="1.500"/><circle cx="1.700" cy="6.300" r="1.700" fill="#000"/><rect x="7.700" y="4.800" width="3.200" height="3" fill="#000"/><rect x="3.600" y="12.300" width="3.800" height="3.700" rx="1" fill="#000"/></svg><div class="t" style="left:578px;top:154px">[6]GoodCRC</div><div class="t" style="left:738px;top:154px">SOP H=0x0D41 CRC=0xD60A1006 EOP</div><div class="ln" style="top:171px"></div><div style="left:1px;top:172px;width:55px;height:18px;background:#ffffc0"></div><div class="t c" style="left:1px;top:172px;width:55px">v2.0</div><div class="t r" style="left:56px;top:172px;width:76px">217</div><div class="t r" style="left:136px;top:172px;width:96px">0:05.588.078</div><div class="t r" style="left:236px;top:172px;width:51px">761 us</div><div class="t r" style="left:291px;top:172px;width:51px">14 B</div><div class="t c" style="left:382px;top:172px;width:35px">1</div><div class="t" style="left:421px;top:172px">Source:UFP</div><svg style="left:494px;top:174px" width="10" height="13" viewBox="0 0 10 13"><path d="M5 .8L9.300 6H7v5.300H3V6H.7z" fill="#fff" stroke="#000" stroke-width="1.150"/></svg><svg style="left:541px;top:175px" width="8" height="11" viewBox="0 0 8 11"><path d="M1.600 1.200l4.400 4.200-4.400 4.200" fill="none" stroke="#a4a4a4" stroke-width="1.900"/></svg><svg style="left:560px;top:173px" width="10.500" height="15.300" viewBox="0 0 11 16"><path d="M5.500 0L3 3.600h5z" fill="#000"/><path d="M5.500 3v10.500" stroke="#000" stroke-width="1.500"/><path d="M5.500 11.200L1.700 8.300V6.500M5.500 12.700l3.800-3V7" fill="none" stroke="#000" stroke-width="1.500"/><circle cx="1.700" cy="6.300" r="1.700" fill="#000"/><rect x="7.700" y="4.800" width="3.200" height="3" fill="#000"/><rect x="3.600" y="12.300" width="3.800" height="3.700" rx="1" fill="#000"/></svg><div class="t" style="left:578px;top:172px">[1]VDM:DiscMode</div><div class="t" style="left:738px;top:172px">SOP H=0x234F 0xFF018043 0x00000C05 CRC=0x27BFB8BE EOP</div><div class="ln" style="top:189px"></div><div class="t r" style="left:56px;top:190px;width:76px">222</div><div class="t r" style="left:136px;top:190px;width:96px">0:05.588.877</div><div class="t r" style="left:236px;top:190px;width:51px">521 us</div><div class="t r" style="left:291px;top:190px;width:51px">6 B</div><div class="t c" style="left:382px;top:190px;width:35px">1</div><div class="t" style="left:421px;top:190px">Sink:DFP</div><svg style="left:479px;top:192px" width="10" height="13" viewBox="0 0 10 13"><defs><linearGradient id="da5" x1="0" y1="0" x2="1" y2="0"><stop offset="0" stop-color="#222"/><stop offset="1" stop-color="#666"/></linearGradient></defs><path d="M3 .5h4v6h2.500L5 12.200.5 6.500H3z" fill="url(#da5)" stroke="#222" stroke-width=".6"/></svg><svg style="left:541px;top:193px" width="8" height="11" viewBox="0 0 8 11"><path d="M1.600 1.200l4.400 4.200-4.400 4.200" fill="none" stroke="#a4a4a4" stroke-width="1.900"/></svg><svg style="left:560px;top:191px" width="10.500" height="15.300" viewBox="0 0 11 16"><path d="M5.500 0L3 3.600h5z" fill="#000"/><path d="M5.500 3v10.500" stroke="#000" stroke-width="1.500"/><path d="M5.500 11.200L1.700 8.300V6.500M5.500 12.700l3.800-3V7" fill="none" stroke="#000" stroke-width="1.500"/><circle cx="1.700" cy="6.300" r="1.700" fill="#000"/><rect x="7.700" y="4.800" width="3.200" height="3" fill="#000"/><rect x="3.600" y="12.300" width="3.800" height="3.700" rx="1" fill="#000"/></svg><div class="t" style="left:578px;top:190px">[1]GoodCRC</div><div class="t" style="left:738px;top:190px">SOP H=0x0261 CRC=0xD3312935 EOP</div><div class="ln" style="top:207px"></div><div style="left:1px;top:208px;width:55px;height:18px;background:#ffffc0"></div><div class="t c" style="left:1px;top:208px;width:55px">v2.0</div><div class="t r" style="left:56px;top:208px;width:76px">225</div><div class="t r" style="left:136px;top:208px;width:96px">0:05.623.538</div><div class="t r" style="left:236px;top:208px;width:51px">662 us</div><div class="t r" style="left:291px;top:208px;width:51px">10 B</div><div class="t c" style="left:382px;top:208px;width:35px">1</div><div class="t" style="left:421px;top:208px">Sink:DFP</div><svg style="left:479px;top:210px" width="10" height="13" viewBox="0 0 10 13"><defs><linearGradient id="da6" x1="0" y1="0" x2="1" y2="0"><stop offset="0" stop-color="#222"/><stop offset="1" stop-color="#666"/></linearGradient></defs><path d="M3 .5h4v6h2.500L5 12.200.5 6.500H3z" fill="url(#da6)" stroke="#222" stroke-width=".6"/></svg><svg style="left:541px;top:211px" width="8" height="11" viewBox="0 0 8 11"><path d="M1.600 1.200l4.400 4.200-4.400 4.200" fill="none" stroke="#a4a4a4" stroke-width="1.900"/></svg><svg style="left:560px;top:209px" width="10.500" height="15.300" viewBox="0 0 11 16"><path d="M5.500 0L3 3.600h5z" fill="#000"/><path d="M5.500 3v10.500" stroke="#000" stroke-width="1.500"/><path d="M5.500 11.200L1.700 8.300V6.500M5.500 12.700l3.800-3V7" fill="none" stroke="#000" stroke-width="1.500"/><circle cx="1.700" cy="6.300" r="1.700" fill="#000"/><rect x="7.700" y="4.800" width="3.200" height="3" fill="#000"/><rect x="3.600" y="12.300" width="3.800" height="3.700" rx="1" fill="#000"/></svg><div class="t" style="left:578px;top:208px">[7]VDM:EnterMode</div><div class="t" style="left:738px;top:208px">SOP H=0x1E6F 0xFF018104 CRC=0xCC3C0DE3 EOP</div><div class="ln" style="top:225px"></div><div class="t r" style="left:56px;top:226px;width:76px">229</div><div class="t r" style="left:136px;top:226px;width:96px">0:05.624.109</div><div class="t r" style="left:236px;top:226px;width:51px">493 us</div><div class="t r" style="left:291px;top:226px;width:51px">6 B</div><div class="t c" style="left:382px;top:226px;width:35px">1</div><div class="t" style="left:421px;top:226px">Source:UFP</div><svg style="left:494px;top:228px" width="10" height="13" viewBox="0 0 10 13"><path d="M5 .8L9.300 6H7v5.300H3V6H.7z" fill="#fff" stroke="#000" stroke-width="1.150"/></svg><svg style="left:541px;top:229px" width="8" height="11" viewBox="0 0 8 11"><path d="M1.600 1.200l4.400 4.200-4.400 4.200" fill="none" stroke="#a4a4a4" stroke-width="1.900"/></svg><svg style="left:560px;top:227px" width="10.500" height="15.300" viewBox="0 0 11 16"><path d="M5.500 0L3 3.600h5z" fill="#000"/><path d="M5.500 3v10.500" stroke="#000" stroke-width="1.500"/><path d="M5.500 11.200L1.700 8.300V6.500M5.500 12.700l3.800-3V7" fill="none" stroke="#000" stroke-width="1.500"/><circle cx="1.700" cy="6.300" r="1.700" fill="#000"/><rect x="7.700" y="4.800" width="3.200" height="3" fill="#000"/><rect x="3.600" y="12.300" width="3.800" height="3.700" rx="1" fill="#000"/></svg><div class="t" style="left:578px;top:226px">[7]GoodCRC</div><div class="t" style="left:738px;top:226px">SOP H=0x0F41 CRC=0x3804712A EOP</div><div class="ln" style="top:243px"></div><div style="left:1px;top:244px;width:55px;height:18px;background:#ffffc0"></div><div class="t c" style="left:1px;top:244px;width:55px">v2.0</div><div class="t r" style="left:56px;top:244px;width:76px">232</div><div class="t r" style="left:136px;top:244px;width:96px">0:05.624.993</div><div class="t r" style="left:236px;top:244px;width:51px">626 us</div><div class="t r" style="left:291px;top:244px;width:51px">10 B</div><div class="t c" style="left:382px;top:244px;width:35px">1</div><div class="t" style="left:421px;top:244px">Source:UFP</div><svg style="left:494px;top:246px" width="10" height="13" viewBox="0 0 10 13"><path d="M5 .8L9.300 6H7v5.300H3V6H.7z" fill="#fff" stroke="#000" stroke-width="1.150"/></svg><svg style="left:541px;top:247px" width="8" height="11" viewBox="0 0 8 11"><path d="M1.600 1.200l4.400 4.200-4.400 4.200" fill="none" stroke="#a4a4a4" stroke-width="1.900"/></svg><svg style="left:560px;top:245px" width="10.500" height="15.300" viewBox="0 0 11 16"><path d="M5.500 0L3 3.600h5z" fill="#000"/><path d="M5.500 3v10.500" stroke="#000" stroke-width="1.500"/><path d="M5.500 11.200L1.700 8.300V6.500M5.500 12.700l3.800-3V7" fill="none" stroke="#000" stroke-width="1.500"/><circle cx="1.700" cy="6.300" r="1.700" fill="#000"/><rect x="7.700" y="4.800" width="3.200" height="3" fill="#000"/><rect x="3.600" y="12.300" width="3.800" height="3.700" rx="1" fill="#000"/></svg><div class="t" style="left:578px;top:244px">[2]VDM:EnterMode</div><div class="t" style="left:738px;top:244px">SOP H=0x154F 0xFF018144 CRC=0x275461F9 EOP</div><div class="ln" style="top:261px"></div><div class="t r" style="left:56px;top:262px;width:76px">236</div><div class="t r" style="left:136px;top:262px;width:96px">0:05.625.577</div><div class="t r" style="left:236px;top:262px;width:51px">525 us</div><div class="t r" style="left:291px;top:262px;width:51px">6 B</div><div class="t c" style="left:382px;top:262px;width:35px">1</div><div class="t" style="left:421px;top:262px">Sink:DFP</div><svg style="left:479px;top:264px" width="10" height="13" viewBox="0 0 10 13"><defs><linearGradient id="da9" x1="0" y1="0" x2="1" y2="0"><stop offset="0" stop-color="#222"/><stop offset="1" stop-color="#666"/></linearGradient></defs><path d="M3 .5h4v6h2.500L5 12.200.5 6.500H3z" fill="url(#da9)" stroke="#222" stroke-width=".6"/></svg><svg style="left:541px;top:265px" width="8" height="11" viewBox="0 0 8 11"><path d="M1.600 1.200l4.400 4.200-4.400 4.200" fill="none" stroke="#a4a4a4" stroke-width="1.900"/></svg><svg style="left:560px;top:263px" width="10.500" height="15.300" viewBox="0 0 11 16"><path d="M5.500 0L3 3.600h5z" fill="#000"/><path d="M5.500 3v10.500" stroke="#000" stroke-width="1.500"/><path d="M5.500 11.200L1.700 8.300V6.500M5.500 12.700l3.800-3V7" fill="none" stroke="#000" stroke-width="1.500"/><circle cx="1.700" cy="6.300" r="1.700" fill="#000"/><rect x="7.700" y="4.800" width="3.200" height="3" fill="#000"/><rect x="3.600" y="12.300" width="3.800" height="3.700" rx="1" fill="#000"/></svg><div class="t" style="left:578px;top:262px">[2]GoodCRC</div><div class="t" style="left:738px;top:262px">SOP H=0x0461 CRC=0x3A528C00 EOP</div><div class="ln" style="top:279px"></div><div class="t r" style="left:56px;top:280px;width:76px">239</div><div class="t r" style="left:136px;top:280px;width:96px">0:05.626.007</div><div class="t c" style="left:382px;top:280px;width:35px">1</div><svg style="left:558px;top:281px" width="15" height="14" viewBox="0 0 15 14"><rect x=".7" y=".7" width="13.600" height="12.600" rx="1.800" fill="#d9deea" stroke="#6e7a96" stroke-width="1.300"/><rect x="2.800" y="2.800" width="9.400" height="8.400" fill="#cfe6fb" stroke="#7b88a8" stroke-width="1"/><text x="7.500" y="9.300" font-family="Liberation Sans,sans-serif" font-weight="bold" font-size="6.200" text-anchor="middle" fill="#a00010" stroke="#a00010" stroke-width=".25">IOI</text></svg><div class="t" style="left:578px;top:280px">PD</div><div class="ln" style="top:297px"></div><div style="left:1px;top:298px;width:55px;height:18px;background:#ffffc0"></div><div class="t c" style="left:1px;top:298px;width:55px">v2.0</div><div class="t r" style="left:56px;top:298px;width:76px">240</div><div class="t r" style="left:136px;top:298px;width:96px">0:05.626.218</div><div class="t r" style="left:236px;top:298px;width:51px">802 us</div><div class="t r" style="left:291px;top:298px;width:51px">14 B</div><div class="t c" style="left:382px;top:298px;width:35px">1</div><div class="t" style="left:421px;top:298px">Sink:DFP</div><svg style="left:479px;top:300px" width="10" height="13" viewBox="0 0 10 13"><defs><linearGradient id="da11" x1="0" y1="0" x2="1" y2="0"><stop offset="0" stop-color="#222"/><stop offset="1" stop-color="#666"/></linearGradient></defs><path d="M3 .5h4v6h2.500L5 12.200.5 6.500H3z" fill="url(#da11)" stroke="#222" stroke-width=".6"/></svg><svg style="left:541px;top:301px" width="8" height="11" viewBox="0 0 8 11"><path d="M1.600 1.200l4.400 4.200-4.400 4.200" fill="none" stroke="#a4a4a4" stroke-width="1.900"/></svg><svg style="left:560px;top:299px" width="10.500" height="15.300" viewBox="0 0 11 16"><path d="M5.500 0L3 3.600h5z" fill="#000"/><path d="M5.500 3v10.500" stroke="#000" stroke-width="1.500"/><path d="M5.500 11.200L1.700 8.300V6.500M5.500 12.700l3.800-3V7" fill="none" stroke="#000" stroke-width="1.500"/><circle cx="1.700" cy="6.300" r="1.700" fill="#000"/><rect x="7.700" y="4.800" width="3.200" height="3" fill="#000"/><rect x="3.600" y="12.300" width="3.800" height="3.700" rx="1" fill="#000"/></svg><div class="t" style="left:578px;top:298px">[0]VDM:DPStatus</div><div class="t" style="left:738px;top:298px">SOP H=0x206F 0xFF018110 0x00000001 CRC=0xAAC91609 EOP</div><div class="ln" style="top:315px"></div><div class="t r" style="left:56px;top:316px;width:76px">245</div><div class="t r" style="left:136px;top:316px;width:96px">0:05.627.140</div><div class="t r" style="left:236px;top:316px;width:51px">496 us</div><div class="t r" style="left:291px;top:316px;width:51px">6 B</div><div class="t c" style="left:382px;top:316px;width:35px">1</div><div class="t" style="left:421px;top:316px">Source:UFP</div><svg style="left:494px;top:318px" width="10" height="13" viewBox="0 0 10 13"><path d="M5 .8L9.300 6H7v5.300H3V6H.7z" fill="#fff" stroke="#000" stroke-width="1.150"/></svg><svg style="left:541px;top:319px" width="8" height="11" viewBox="0 0 8 11"><path d="M1.600 1.200l4.400 4.200-4.400 4.200" fill="none" stroke="#a4a4a4" stroke-width="1.900"/></svg><svg style="left:560px;top:317px" width="10.500" height="15.300" viewBox="0 0 11 16"><path d="M5.500 0L3 3.600h5z" fill="#000"/><path d="M5.500 3v10.500" stroke="#000" stroke-width="1.500"/><path d="M5.500 11.200L1.700 8.300V6.500M5.500 12.700l3.800-3V7" fill="none" stroke="#000" stroke-width="1.500"/><circle cx="1.700" cy="6.300" r="1.700" fill="#000"/><rect x="7.700" y="4.800" width="3.200" height="3" fill="#000"/><rect x="3.600" y="12.300" width="3.800" height="3.700" rx="1" fill="#000"/></svg><div class="t" style="left:578px;top:316px">[0]GoodCRC</div><div class="t" style="left:738px;top:316px">SOP H=0x0141 CRC=0xDFBC5C2D EOP</div><div class="ln" style="top:333px"></div><div style="left:1px;top:334px;width:55px;height:18px;background:#ffffc0"></div><div class="t c" style="left:1px;top:334px;width:55px">v2.0</div><div class="t r" style="left:56px;top:334px;width:76px">248</div><div class="t r" style="left:136px;top:334px;width:96px">0:05.627.973</div><div class="t r" style="left:236px;top:334px;width:51px">758 us</div><div class="t r" style="left:291px;top:334px;width:51px">14 B</div><div class="t c" style="left:382px;top:334px;width:35px">1</div><div class="t" style="left:421px;top:334px">Source:UFP</div><svg style="left:494px;top:336px" width="10" height="13" viewBox="0 0 10 13"><path d="M5 .8L9.300 6H7v5.300H3V6H.7z" fill="#fff" stroke="#000" stroke-width="1.150"/></svg><svg style="left:541px;top:337px" width="8" height="11" viewBox="0 0 8 11"><path d="M1.600 1.200l4.400 4.200-4.400 4.200" fill="none" stroke="#a4a4a4" stroke-width="1.900"/></svg><svg style="left:560px;top:335px" width="10.500" height="15.300" viewBox="0 0 11 16"><path d="M5.500 0L3 3.600h5z" fill="#000"/><path d="M5.500 3v10.500" stroke="#000" stroke-width="1.500"/><path d="M5.500 11.200L1.700 8.300V6.500M5.500 12.700l3.800-3V7" fill="none" stroke="#000" stroke-width="1.500"/><circle cx="1.700" cy="6.300" r="1.700" fill="#000"/><rect x="7.700" y="4.800" width="3.200" height="3" fill="#000"/><rect x="3.600" y="12.300" width="3.800" height="3.700" rx="1" fill="#000"/></svg><div class="t" style="left:578px;top:334px">[3]VDM:DPStatus</div><div class="t" style="left:738px;top:334px">SOP H=0x274F 0xFF018150 0x0000001A CRC=0x2F706A63 EOP</div><div class="ln" style="top:351px"></div><div class="t r" style="left:56px;top:352px;width:76px">253</div><div class="t r" style="left:136px;top:352px;width:96px">0:05.628.771</div><div class="t r" style="left:236px;top:352px;width:51px">521 us</div><div class="t r" style="left:291px;top:352px;width:51px">6 B</div><div class="t c" style="left:382px;top:352px;width:35px">1</div><div class="t" style="left:421px;top:352px">Sink:DFP</div><svg style="left:479px;top:354px" width="10" height="13" viewBox="0 0 10 13"><defs><linearGradient id="da14" x1="0" y1="0" x2="1" y2="0"><stop offset="0" stop-color="#222"/><stop offset="1" stop-color="#666"/></linearGradient></defs><path d="M3 .5h4v6h2.500L5 12.200.5 6.500H3z" fill="url(#da14)" stroke="#222" stroke-width=".6"/></svg><svg style="left:541px;top:355px" width="8" height="11" viewBox="0 0 8 11"><path d="M1.600 1.200l4.400 4.200-4.400 4.200" fill="none" stroke="#a4a4a4" stroke-width="1.900"/></svg><svg style="left:560px;top:353px" width="10.500" height="15.300" viewBox="0 0 11 16"><path d="M5.500 0L3 3.600h5z" fill="#000"/><path d="M5.500 3v10.500" stroke="#000" stroke-width="1.500"/><path d="M5.500 11.200L1.700 8.300V6.500M5.500 12.700l3.800-3V7" fill="none" stroke="#000" stroke-width="1.500"/><circle cx="1.700" cy="6.300" r="1.700" fill="#000"/><rect x="7.700" y="4.800" width="3.200" height="3" fill="#000"/><rect x="3.600" y="12.300" width="3.800" height="3.700" rx="1" fill="#000"/></svg><div class="t" style="left:578px;top:352px">[3]GoodCRC</div><div class="t" style="left:738px;top:352px">SOP H=0x0661 CRC=0xD45CED2C EOP</div><div class="ln" style="top:369px"></div><div style="left:1px;top:370px;width:55px;height:18px;background:#ffffc0"></div><div class="t c" style="left:1px;top:370px;width:55px">v2.0</div><div class="t r" style="left:56px;top:370px;width:76px">256</div><div class="t r" style="left:136px;top:370px;width:96px">0:05.660.774</div><div class="t r" style="left:236px;top:370px;width:51px">801 us</div><div class="t r" style="left:291px;top:370px;width:51px">14 B</div><div class="t c" style="left:382px;top:370px;width:35px">1</div><div class="t" style="left:421px;top:370px">Sink:DFP</div><svg style="left:479px;top:372px" width="10" height="13" viewBox="0 0 10 13"><defs><linearGradient id="da15" x1="0" y1="0" x2="1" y2="0"><stop offset="0" stop-color="#222"/><stop offset="1" stop-color="#666"/></linearGradient></defs><path d="M3 .5h4v6h2.500L5 12.200.5 6.500H3z" fill="url(#da15)" stroke="#222" stroke-width=".6"/></svg><svg style="left:541px;top:373px" width="8" height="11" viewBox="0 0 8 11"><path d="M1.600 1.200l4.400 4.200-4.400 4.200" fill="none" stroke="#a4a4a4" stroke-width="1.900"/></svg><svg style="left:560px;top:371px" width="10.500" height="15.300" viewBox="0 0 11 16"><path d="M5.500 0L3 3.600h5z" fill="#000"/><path d="M5.500 3v10.500" stroke="#000" stroke-width="1.500"/><path d="M5.500 11.200L1.700 8.300V6.500M5.500 12.700l3.800-3V7" fill="none" stroke="#000" stroke-width="1.500"/><circle cx="1.700" cy="6.300" r="1.700" fill="#000"/><rect x="7.700" y="4.800" width="3.200" height="3" fill="#000"/><rect x="3.600" y="12.300" width="3.800" height="3.700" rx="1" fill="#000"/></svg><div class="t" style="left:578px;top:370px">[1]VDM:DPConfigure</div><div class="t" style="left:738px;top:370px">SOP H=0x226F 0xFF018111 0x00000806 CRC=0xDB515710 EOP</div><div class="ln" style="top:387px"></div><div class="t r" style="left:56px;top:388px;width:76px">261</div><div class="t r" style="left:136px;top:388px;width:96px">0:05.661.578</div><div class="t r" style="left:236px;top:388px;width:51px">496 us</div><div class="t r" style="left:291px;top:388px;width:51px">6 B</div><div class="t c" style="left:382px;top:388px;width:35px">1</div><div class="t" style="left:421px;top:388px">Source:UFP</div><svg style="left:494px;top:390px" width="10" height="13" viewBox="0 0 10 13"><path d="M5 .8L9.300 6H7v5.300H3V6H.7z" fill="#fff" stroke="#000" stroke-width="1.150"/></svg><svg style="left:541px;top:391px" width="8" height="11" viewBox="0 0 8 11"><path d="M1.600 1.200l4.400 4.200-4.400 4.200" fill="none" stroke="#a4a4a4" stroke-width="1.900"/></svg><svg style="left:560px;top:389px" width="10.500" height="15.300" viewBox="0 0 11 16"><path d="M5.500 0L3 3.600h5z" fill="#000"/><path d="M5.500 3v10.500" stroke="#000" stroke-width="1.500"/><path d="M5.500 11.200L1.700 8.300V6.500M5.500 12.700l3.800-3V7" fill="none" stroke="#000" stroke-width="1.500"/><circle cx="1.700" cy="6.300" r="1.700" fill="#000"/><rect x="7.700" y="4.800" width="3.200" height="3" fill="#000"/><rect x="3.600" y="12.300" width="3.800" height="3.700" rx="1" fill="#000"/></svg><div class="t" style="left:578px;top:388px">[1]GoodCRC</div><div class="t" style="left:738px;top:388px">SOP H=0x0341 CRC=0x31B23D01 EOP</div><div class="ln" style="top:405px"></div><div style="left:1px;top:406px;width:55px;height:18px;background:#ffffc0"></div><div class="t c" style="left:1px;top:406px;width:55px">v2.0</div><div style="left:56px;top:406px;width:1069px;height:17px;background:#c0dcf3"></div><div class="t r" style="left:56px;top:406px;width:76px">264</div><div class="t r" style="left:136px;top:406px;width:96px">0:05.662.217</div><div class="t r" style="left:236px;top:406px;width:51px">629 us</div><div class="t r" style="left:291px;top:406px;width:51px">10 B</div><div class="t c" style="left:382px;top:406px;width:35px">1</div><div class="t" style="left:421px;top:406px">Source:UFP</div><svg style="left:494px;top:408px" width="10" height="13" viewBox="0 0 10 13"><path d="M5 .8L9.300 6H7v5.300H3V6H.7z" fill="#fff" stroke="#000" stroke-width="1.150"/></svg><svg style="left:541px;top:409px" width="8" height="11" viewBox="0 0 8 11"><path d="M1.600 1.200l4.400 4.200-4.400 4.200" fill="none" stroke="#a4a4a4" stroke-width="1.900"/></svg><svg style="left:560px;top:407px" width="10.500" height="15.300" viewBox="0 0 11 16"><path d="M5.500 0L3 3.600h5z" fill="#000"/><path d="M5.500 3v10.500" stroke="#000" stroke-width="1.500"/><path d="M5.500 11.200L1.700 8.300V6.500M5.500 12.700l3.800-3V7" fill="none" stroke="#000" stroke-width="1.500"/><circle cx="1.700" cy="6.300" r="1.700" fill="#000"/><rect x="7.700" y="4.800" width="3.200" height="3" fill="#000"/><rect x="3.600" y="12.300" width="3.800" height="3.700" rx="1" fill="#000"/></svg><div class="t" style="left:578px;top:406px">[4]VDM:DPConfigure</div><div class="t" style="left:738px;top:406px">SOP H=0x194F 0xFF018151 CRC=0x85632B55 EOP</div><div class="ln" style="top:423px;background:#c0dcf3"></div><div class="t r" style="left:56px;top:424px;width:76px">268</div><div class="t r" style="left:136px;top:424px;width:96px">0:05.663.019</div><div class="t r" style="left:236px;top:424px;width:51px">525 us</div><div class="t r" style="left:291px;top:424px;width:51px">6 B</div><div class="t c" style="left:382px;top:424px;width:35px">1</div><div class="t" style="left:421px;top:424px">Sink:DFP</div><svg style="left:479px;top:426px" width="10" height="13" viewBox="0 0 10 13"><defs><linearGradient id="da18" x1="0" y1="0" x2="1" y2="0"><stop offset="0" stop-color="#222"/><stop offset="1" stop-color="#666"/></linearGradient></defs><path d="M3 .5h4v6h2.500L5 12.200.5 6.500H3z" fill="url(#da18)" stroke="#222" stroke-width=".6"/></svg><svg style="left:541px;top:427px" width="8" height="11" viewBox="0 0 8 11"><path d="M1.600 1.200l4.400 4.200-4.400 4.200" fill="none" stroke="#a4a4a4" stroke-width="1.900"/></svg><svg style="left:560px;top:425px" width="10.500" height="15.300" viewBox="0 0 11 16"><path d="M5.500 0L3 3.600h5z" fill="#000"/><path d="M5.500 3v10.500" stroke="#000" stroke-width="1.500"/><path d="M5.500 11.200L1.700 8.300V6.500M5.500 12.700l3.800-3V7" fill="none" stroke="#000" stroke-width="1.500"/><circle cx="1.700" cy="6.300" r="1.700" fill="#000"/><rect x="7.700" y="4.800" width="3.200" height="3" fill="#000"/><rect x="3.600" y="12.300" width="3.800" height="3.700" rx="1" fill="#000"/></svg><div class="t" style="left:578px;top:424px">[4]GoodCRC</div><div class="t" style="left:738px;top:424px">SOP H=0x0861 CRC=0x33E4C02B EOP</div><div class="ln" style="top:441px"></div><div class="t r" style="left:56px;top:442px;width:76px">271</div><div class="t r" style="left:136px;top:442px;width:96px">0:05.663.550</div><div class="t c" style="left:382px;top:442px;width:35px">1</div><svg style="left:558px;top:443px" width="15" height="14" viewBox="0 0 15 14"><rect x=".7" y=".7" width="13.600" height="12.600" rx="1.800" fill="#d9deea" stroke="#6e7a96" stroke-width="1.300"/><rect x="2.800" y="2.800" width="9.400" height="8.400" fill="#cfe6fb" stroke="#7b88a8" stroke-width="1"/><text x="7.500" y="9.300" font-family="Liberation Sans,sans-serif" font-weight="bold" font-size="6.200" text-anchor="middle" fill="#a00010" stroke="#a00010" stroke-width=".25">IOI</text></svg><div class="t" style="left:578px;top:442px">PD</div><div class="ln" style="top:459px"></div><div style="left:1px;top:460px;width:55px;height:18px;background:#ffffc0"></div><div class="t c" style="left:1px;top:460px;width:55px">v2.0</div><div class="t r" style="left:56px;top:460px;width:76px">272</div><div class="t r" style="left:136px;top:460px;width:96px">0:06.181.900</div><div class="t r" style="left:236px;top:460px;width:51px">761 us</div><div class="t r" style="left:291px;top:460px;width:51px">14 B</div><div class="t c" style="left:382px;top:460px;width:35px">1</div><div class="t" style="left:421px;top:460px">Source:UFP</div><svg style="left:494px;top:462px" width="10" height="13" viewBox="0 0 10 13"><path d="M5 .8L9.300 6H7v5.300H3V6H.7z" fill="#fff" stroke="#000" stroke-width="1.150"/></svg><svg style="left:541px;top:463px" width="8" height="11" viewBox="0 0 8 11"><path d="M1.600 1.200l4.400 4.200-4.400 4.200" fill="none" stroke="#a4a4a4" stroke-width="1.900"/></svg><svg style="left:560px;top:461px" width="10.500" height="15.300" viewBox="0 0 11 16"><path d="M5.500 0L3 3.600h5z" fill="#000"/><path d="M5.500 3v10.500" stroke="#000" stroke-width="1.500"/><path d="M5.500 11.200L1.700 8.300V6.500M5.500 12.700l3.800-3V7" fill="none" stroke="#000" stroke-width="1.500"/><circle cx="1.700" cy="6.300" r="1.700" fill="#000"/><rect x="7.700" y="4.800" width="3.200" height="3" fill="#000"/><rect x="3.600" y="12.300" width="3.800" height="3.700" rx="1" fill="#000"/></svg><div class="t" style="left:578px;top:460px">[5]VDM:Attention</div><div class="t" style="left:738px;top:460px">SOP H=0x2B4F 0xFF018106 0x0000009A CRC=0xB754D50D EOP</div><div style="left:1px;top:477px;width:1124px;height:1px;background:#fff"></div><div style="left:1125px;top:79px;width:1px;height:399px;background:#fff"></div><div style="left:1126px;top:79px;width:16px;height:399px;background:#f0f0f0"></div><div style="left:1126px;top:305px;width:15px;height:32px;background:#cdcdcd"></div><div style="left:1129px;top:316px;width:9px;height:10px;background:#f0f0f0"></div><svg style="left:1127.500px;top:83px" width="12" height="10" viewBox="0 0 12 10"><path d="M2.200 6.800L6 3l3.800 3.800" fill="none" stroke="#505050" stroke-width="2"/></svg><svg style="left:1127.500px;top:464px" width="12" height="10" viewBox="0 0 12 10"><path d="M2.200 3L6 6.800 9.800 3" fill="none" stroke="#505050" stroke-width="2"/></svg><div style="left:1px;top:478px;width:1141px;height:17px;background:#f0f0f0"></div><div style="left:18px;top:478px;width:633px;height:15px;background:#cdcdcd"></div><div style="left:329px;top:481px;width:10px;height:9px;background:#f0f0f0"></div><svg style="left:4.300px;top:479.600px" width="10" height="12" viewBox="0 0 10 12"><path d="M6.800 2.200L3 6l3.800 3.800" fill="none" stroke="#505050" stroke-width="2"/></svg><svg style="left:1112.100px;top:479.600px" width="10" height="12" viewBox="0 0 10 12"><path d="M3 2.200L6.800 6 3 9.800" fill="none" stroke="#505050" stroke-width="2"/></svg><div style="left:1px;top:494px;width:1141px;height:1px;background:#dfdfdf"></div><div style="left:1px;top:495px;width:1141px;height:54px;background:#f0f0f0"></div><div class="btn" style="left:4px;top:500px;width:74px;height:20px"></div><div class="sf" style="left:9px;top:502px;line-height:16px">Text</div><svg style="left:64px;top:507px" width="9" height="6" viewBox="0 0 9 6"><path d="M.5 .5h8L4.500 5z" fill="#000"/></svg><svg style="left:81px;top:502px" width="16" height="16" viewBox="0 0 16 16"><circle cx="6.500" cy="6.500" r="5" fill="#e8f4ff" stroke="#4aa0ea" stroke-width="1.600"/><path d="M10.500 10.500l3.800 3.800" stroke="#8a7ad8" stroke-width="2.400" stroke-linecap="round"/></svg><div style="left:100px;top:500px;width:150px;height:20px;background:#fff;border:1px solid #7a7a7a"></div><div class="sf" style="left:105px;top:502px;line-height:16px;font-size:11.5px">LiveSearch</div><svg style="left:236px;top:507px" width="10" height="7" viewBox="0 0 10 7"><path d="M1 1l4 4 4-4" fill="none" stroke="#444" stroke-width="1.100"/></svg><div style="left:254px;top:499px;width:22px;height:22px;background:#e1e1e1;border:1px solid #adadad"></div><svg style="left:258px;top:503px" width="14" height="14" viewBox="0 0 14 14"><defs><linearGradient id="bs258" x1="0" y1="0" x2="0" y2="1"><stop offset="0" stop-color="#2f8ff0"/><stop offset="1" stop-color="#56aaf6"/></linearGradient></defs><rect x=".5" y=".5" width="13" height="13" rx="1.500" fill="url(#bs258)" stroke="#1f7be0"/><path d="M9.500 3v8L3.500 7z" fill="#ffd54a"/></svg><div style="left:281px;top:499px;width:22px;height:22px;background:#e1e1e1;border:1px solid #adadad"></div><svg style="left:285px;top:503px" width="14" height="14" viewBox="0 0 14 14"><defs><linearGradient id="bs285" x1="0" y1="0" x2="0" y2="1"><stop offset="0" stop-color="#2f8ff0"/><stop offset="1" stop-color="#56aaf6"/></linearGradient></defs><rect x=".5" y=".5" width="13" height="13" rx="1.500" fill="url(#bs285)" stroke="#1f7be0"/><path d="M4.500 3v8l6-4z" fill="#ffd54a"/></svg><div class="sf" style="left:9px;top:528px;line-height:16px;font-size:11.5px">No filter: 515 records.</div><div style="left:912px;top:499px;width:22px;height:22px;background:#e1e1e1;border:1px solid #adadad"></div><svg style="left:915px;top:502px" width="16" height="16" viewBox="0 0 16 16"><path d="M8 2v12M2 8h12" stroke="#1c6ea0" stroke-width="2.600"/><path d="M8 2.600v10.800M2.600 8h10.800" stroke="#8fd0f0" stroke-width=".8"/></svg><div style="left:939px;top:499px;width:22px;height:22px;background:#e1e1e1;border:1px solid #adadad"></div><svg style="left:942px;top:502px" width="16" height="16" viewBox="0 0 16 16"><path d="M2.500 8h11" stroke="#1c6ea0" stroke-width="2.600"/><path d="M3 8h10" stroke="#8fd0f0" stroke-width=".8"/></svg><div style="left:971px;top:499px;width:22px;height:22px;background:#e1e1e1;border:1px solid #adadad"></div><svg style="left:975px;top:503px" width="14" height="14" viewBox="0 0 14 14"><defs><linearGradient id="bs975" x1="0" y1="0" x2="0" y2="1"><stop offset="0" stop-color="#2f8ff0"/><stop offset="1" stop-color="#56aaf6"/></linearGradient></defs><rect x=".5" y=".5" width="13" height="13" rx="1.500" fill="url(#bs975)" stroke="#1f7be0"/><path d="M3.500 3h7v1.500h-7zM7 5.500l3.500 5h-7z" fill="#ffd54a"/></svg><div style="left:998px;top:499px;width:22px;height:22px;background:#e1e1e1;border:1px solid #adadad"></div><svg style="left:1002px;top:503px" width="14" height="14" viewBox="0 0 14 14"><defs><linearGradient id="bs1002" x1="0" y1="0" x2="0" y2="1"><stop offset="0" stop-color="#2f8ff0"/><stop offset="1" stop-color="#56aaf6"/></linearGradient></defs><rect x=".5" y=".5" width="13" height="13" rx="1.500" fill="url(#bs1002)" stroke="#1f7be0"/><circle cx="7" cy="7" r="3" fill="#ffd54a"/></svg><div style="left:1025px;top:499px;width:22px;height:22px;background:#e1e1e1;border:1px solid #adadad"></div><svg style="left:1029px;top:503px" width="14" height="14" viewBox="0 0 14 14"><defs><linearGradient id="bs1029" x1="0" y1="0" x2="0" y2="1"><stop offset="0" stop-color="#2f8ff0"/><stop offset="1" stop-color="#56aaf6"/></linearGradient></defs><rect x=".5" y=".5" width="13" height="13" rx="1.500" fill="url(#bs1029)" stroke="#1f7be0"/><path d="M3.500 9.500h7V11h-7zM7 8.500l3.500-5h-7z" fill="#ffd54a"/></svg><div style="left:1057px;top:499px;width:22px;height:22px;background:#cccccc;border:1px solid #cccccc"></div><svg style="left:1060px;top:502px" width="16" height="16" viewBox="0 0 16 16" fill="none" stroke="#e6e6e6"><circle cx="8" cy="8" r="6.500"/><circle cx="8" cy="8" r="4"/><circle cx="8" cy="8" r="1.500" fill="#e6e6e6"/></svg><div style="left:1089px;top:499px;width:22px;height:22px;background:#e1e1e1;border:1px solid #adadad"></div><svg style="left:1092px;top:502px" width="16" height="16" viewBox="0 0 16 16"><path d="M1 3.500h14M1 12.500h14" stroke="#e8b020" stroke-width="2.200"/><path d="M3 5l5 3.200L13 5M3 11l5-3.200 5 3.200" fill="#c8c8c8" stroke="#9a9a9a" stroke-width=".7"/></svg><div style="left:1116px;top:499px;width:22px;height:22px;background:#e1e1e1;border:1px solid #adadad"></div><svg style="left:1119px;top:502px" width="16" height="16" viewBox="0 0 16 16"><path d="M2.500 1.500h10.500v9.500l1.500 1.500v1.500H5L3.500 12.500z" fill="#ffd75e" stroke="#d9a31a" stroke-width="1"/><path d="M2.500 1.500c-1.500 0-1.500 2.500 0 2.500h1" fill="#ffe9a0" stroke="#d9a31a"/></svg><div class="sf" style="left:956.500px;top:529px;line-height:16px;font-size:11.6px">Protocol Lens:</div><div class="btn" style="left:1027px;top:526px;width:62px;height:20px"></div><div class="sf" style="left:1031px;top:529px;line-height:16px;font-size:11.6px">USBPD</div><svg style="left:1074px;top:533px" width="9" height="6" viewBox="0 0 9 6"><path d="M.5 .5h8L4.500 5z" fill="#000"/></svg><div style="left:1092px;top:525px;width:47px;height:22px;background:#cccccc"></div><svg style="left:1097px;top:529px" width="16" height="14" viewBox="0 0 16 14"><path d="M4.500 1.500h10v8h-3v3h-10v-8h3z" fill="#e9e9e9" stroke="#b5b5b5"/><rect x="1.500" y="4.500" width="10" height="8" fill="#f4f4f4" stroke="#b5b5b5"/></svg><svg style="left:1124px;top:533px" width="9" height="6" viewBox="0 0 9 6"><path d="M.5 .5h8L4.500 5z" fill="#ababab"/><path d="M4.500 5L8.500 .5" stroke="#fff" stroke-width=".8"/></svg><div style="left:0;top:554px;width:1143px;height:466px;background:#fafafa;border:1px solid #a0a0a0;border-top-color:#b4b4b4"></div><div style="left:1px;top:555px;width:1141px;height:16px;background:linear-gradient(#bbcde8,#e6eefa);border-bottom:1px solid #aaabad"></div><div class="sf" style="left:6px;top:555px;line-height:15px;font-size:12px">Block View</div><svg style="left:1114.5px;top:558px" width="26" height="9" viewBox="0 0 26 9" fill="none" stroke="#1a1a1a"><path d="M2.700 .8h4.300v4.400" stroke-width="1.200"/><path d="M2.100 1.200h5.500" stroke-width="1.600"/><rect x=".6" y="3.100" width="4.500" height="4.400" stroke-width="1.200"/><path d="M0 3.300h5.700" stroke-width="1.600"/><path d="M16.600 1.400l6.200 5.400M22.800 1.400l-6.200 5.400" stroke-width="1.600"/></svg><div style="left:1px;top:571px;width:1139px;height:24px;background:#fff"></div><div style="left:124px;top:572px;width:1px;height:22px;background:#e2e2e2"></div><div style="left:204px;top:572px;width:1px;height:22px;background:#e2e2e2"></div><div class="ui" style="left:6px;top:575px;line-height:18px;font-size:12.8px">Timestamp</div><div class="ui" style="left:129px;top:575px;line-height:18px;font-size:12.8px">Duration</div><div class="ui" style="left:209px;top:575px;line-height:18px;font-size:12.8px">Record</div><div style="left:1140px;top:571px;width:1px;height:448px;background:#f0f0f0"></div><div style="left:8px;top:600px;width:197px;height:37px;border:1px solid #3a3a3a;border-radius:10px;background:#6a8fb8;box-shadow:2px 2px 1px rgba(0,0,0,.28);overflow:hidden"><div class="bk" style="left:-1px;top:0;width:116px;height:35px;line-height:35px;color:#fff">0:05.662.217.000</div><div style="left:115px;top:0;width:1px;height:35px;background:#3a3a3a"></div><div class="bk" style="left:115px;top:0;width:80px;height:35px;line-height:35px;color:#fff">629.000 us</div></div><div style="left:8px;top:647px;width:197px;height:37px;border:1px solid #3a3a3a;border-radius:10px;background:#fff;box-shadow:2px 2px 1px rgba(0,0,0,.28);overflow:hidden"><div class="bk" style="left:-1px;top:0;width:116px;height:35px;line-height:35px;color:#000">0:05.662.217.000</div><div style="left:115px;top:0;width:1px;height:35px;background:#3a3a3a"></div><div class="bk" style="left:115px;top:0;width:80px;height:35px;line-height:35px;color:#000">629.000 us</div></div><div style="left:8px;top:694px;width:197px;height:37px;border:1px solid #3a3a3a;border-radius:10px;background:#fff;box-shadow:2px 2px 1px rgba(0,0,0,.28);overflow:hidden"><div class="bk" style="left:-1px;top:0;width:116px;height:35px;line-height:35px;color:#000">0:05.662.430.000</div><div style="left:115px;top:0;width:1px;height:35px;background:#3a3a3a"></div><div class="bk" style="left:115px;top:0;width:80px;height:35px;line-height:35px;color:#000">66.000 us</div></div><div style="left:8px;top:741px;width:197px;height:37px;border:1px solid #3a3a3a;border-radius:10px;background:#fff;box-shadow:2px 2px 1px rgba(0,0,0,.28);overflow:hidden"><div class="bk" style="left:-1px;top:0;width:116px;height:35px;line-height:35px;color:#000">0:05.662.496.000</div><div style="left:115px;top:0;width:1px;height:35px;background:#3a3a3a"></div><div class="bk" style="left:115px;top:0;width:80px;height:35px;line-height:35px;color:#000">133.000 us</div></div><div style="left:210.500px;top:612.500px;width:10px;height:10px;border-radius:5px;background:#6a8fb8;border:1px solid #4a6a90"></div><div style="left:250px;top:639px;width:1px;height:118px;background:#b0b0b0"></div><div style="left:250px;top:662px;width:23px;height:1px;background:#b0b0b0"></div><div style="left:250px;top:709px;width:23px;height:1px;background:#b0b0b0"></div><div style="left:250px;top:756px;width:23px;height:1px;background:#b0b0b0"></div><div style="left:227px;top:600px;width:138px;height:37px;border:1px solid #3a3a3a;border-radius:10px;background:linear-gradient(#3adb6a 0,#12a234 17px,#3a3a3a 17px,#3a3a3a 18px,#6a8fb8 18px);box-shadow:2px 2px 1px rgba(0,0,0,.28);overflow:hidden"><div class="bk" style="left:-1px;top:0;width:68px;color:#000">PD Packet</div><div class="bk" style="left:-1px;top:18px;width:68px;line-height:16px;color:#fff">264</div><div style="left:67px;top:0;width:1px;height:35px;background:#3a3a3a"></div><div class="bk" style="left:67px;top:0;width:69px;color:#000">Source <i style="font-style:normal;font-size:12.5px;line-height:10px">&#9651;</i></div><div class="bk" style="left:67px;top:18px;width:69px;line-height:16px;color:#fff">SOP</div></div><div style="left:371px;top:600px;width:280px;height:37px;border:1px solid #3a3a3a;border-radius:10px;background:linear-gradient(#3adb6a 0,#12a234 17px,#3a3a3a 17px,#3a3a3a 18px,#6a8fb8 18px);box-shadow:2px 2px 1px rgba(0,0,0,.28);overflow:hidden"><div class="bk" style="left:-1px;top:0;width:68px;color:#000">SOP Type</div><div class="bk" style="left:-1px;top:18px;width:68px;line-height:16px;color:#fff">SOP</div><div style="left:67px;top:0;width:1px;height:35px;background:#3a3a3a"></div><div class="bk" style="left:67px;top:0;width:55px;color:#000">Header</div><div class="bk" style="left:67px;top:18px;width:55px;line-height:16px;color:#fff">0x194f</div><div style="left:122px;top:0;width:1px;height:35px;background:#3a3a3a"></div><div class="bk" style="left:122px;top:0;width:76px;color:#000">Data 0</div><div class="bk" style="left:122px;top:18px;width:76px;line-height:16px;color:#fff">0xff018151</div><div style="left:198px;top:0;width:1px;height:35px;background:#3a3a3a"></div><div class="bk" style="left:198px;top:0;width:80px;color:#000">CRC</div><div class="bk" style="left:198px;top:18px;width:80px;line-height:16px;color:#fff">0x85632b55</div></div><div style="left:273px;top:647px;width:43px;height:37px;border:1px solid #3a3a3a;border-radius:10px;background:linear-gradient(#ffe9ff 0,#efbdf0 17px,#3a3a3a 17px,#3a3a3a 18px,#fff 18px);box-shadow:2px 2px 1px rgba(0,0,0,.28);overflow:hidden"><div class="bk" style="left:-1px;top:0;width:42px;color:#000">BMC</div><div class="bk" style="left:-1px;top:18px;width:42px;line-height:16px;color:#000">265</div></div><div style="left:322px;top:647px;width:154px;height:37px;border:1px solid #3a3a3a;border-radius:10px;background:linear-gradient(#ffe9ff 0,#efbdf0 17px,#3a3a3a 17px,#3a3a3a 18px,#fff 18px);box-shadow:2px 2px 1px rgba(0,0,0,.28);overflow:hidden"><div class="bk" style="left:-1px;top:0;width:64px;color:#000">Preamble</div><div class="bk" style="left:-1px;top:18px;width:64px;line-height:16px;color:#000">64 Bits</div><div style="left:63px;top:0;width:1px;height:35px;background:#3a3a3a"></div><div class="bk" style="left:63px;top:0;width:89px;color:#000">4b5b Encoded</div><div class="bk" style="left:63px;top:18px;width:89px;line-height:16px;color:#000">126 Bits</div></div><div style="left:273px;top:694px;width:141px;height:37px;border:1px solid #3a3a3a;border-radius:10px;background:linear-gradient(#e455b4 0,#bd1a8c 17px,#3a3a3a 17px,#3a3a3a 18px,#fff 18px);box-shadow:2px 2px 1px rgba(0,0,0,.28);overflow:hidden"><div class="bk" style="left:-1px;top:0;width:71px;color:#fff">PD Header</div><div class="bk" style="left:-1px;top:18px;width:71px;line-height:16px;color:#000">266</div><div style="left:70px;top:0;width:1px;height:35px;background:#3a3a3a"></div><div class="bk" style="left:70px;top:0;width:69px;color:#fff">Source <i style="font-style:normal;font-size:12.5px;line-height:10px">&#9651;</i></div><div class="bk" style="left:70px;top:18px;width:69px;line-height:16px;color:#000">SOP</div></div><div style="left:420px;top:694px;width:386px;height:37px;border:1px solid #3a3a3a;border-radius:10px;background:linear-gradient(#e455b4 0,#bd1a8c 17px,#3a3a3a 17px,#3a3a3a 18px,#fff 18px);box-shadow:2px 2px 1px rgba(0,0,0,.28);overflow:hidden"><div class="bk" style="left:-1px;top:0;width:81px;color:#fff">Num Objects</div><div class="bk" style="left:-1px;top:18px;width:81px;line-height:16px;color:#000">1</div><div style="left:80px;top:0;width:1px;height:35px;background:#3a3a3a"></div><div class="bk" style="left:80px;top:0;width:52px;color:#fff">Msg ID</div><div class="bk" style="left:80px;top:18px;width:52px;line-height:16px;color:#000">4</div><div style="left:132px;top:0;width:1px;height:35px;background:#3a3a3a"></div><div class="bk" style="left:132px;top:0;width:76px;color:#fff">Power Role</div><div class="bk" style="left:132px;top:18px;width:76px;line-height:16px;color:#000">Source</div><div style="left:208px;top:0;width:1px;height:35px;background:#3a3a3a"></div><div class="bk" style="left:208px;top:0;width:67px;color:#fff">Spec Rev</div><div class="bk" style="left:208px;top:18px;width:67px;line-height:16px;color:#000">2.0</div><div style="left:275px;top:0;width:1px;height:35px;background:#3a3a3a"></div><div class="bk" style="left:275px;top:0;width:66px;color:#fff">Data Role</div><div class="bk" style="left:275px;top:18px;width:66px;line-height:16px;color:#000">UFP</div><div style="left:341px;top:0;width:1px;height:35px;background:#3a3a3a"></div><div class="bk" style="left:341px;top:0;width:43px;color:#fff">Msg</div><div class="bk" style="left:341px;top:18px;width:43px;line-height:16px;color:#000">VDM</div></div><div style="left:273px;top:741px;width:105px;height:37px;border:1px solid #3a3a3a;border-radius:10px;background:linear-gradient(#e9f7ff 0,#b4def7 17px,#3a3a3a 17px,#3a3a3a 18px,#fff 18px);box-shadow:2px 2px 1px rgba(0,0,0,.28);overflow:hidden"><div class="bk" style="left:-1px;top:0;width:58px;color:#000">PD Data</div><div class="bk" style="left:-1px;top:18px;width:58px;line-height:16px;color:#000">267</div><div style="left:57px;top:0;width:1px;height:35px;background:#3a3a3a"></div><div class="bk" style="left:57px;top:0;width:46px;color:#000">Index</div><div class="bk" style="left:57px;top:18px;width:46px;line-height:16px;color:#000">0</div></div><div style="left:384px;top:741px;width:371px;height:37px;border:1px solid #3a3a3a;border-radius:10px;background:linear-gradient(#e9f7ff 0,#b4def7 17px,#3a3a3a 17px,#3a3a3a 18px,#fff 18px);box-shadow:2px 2px 1px rgba(0,0,0,.28);overflow:hidden"><div class="bk" style="left:-1px;top:0;width:93px;color:#000">SVID</div><div class="bk" style="left:-1px;top:18px;width:93px;line-height:16px;color:#000">DisplayPort SID</div><div style="left:92px;top:0;width:1px;height:35px;background:#3a3a3a"></div><div class="bk" style="left:92px;top:0;width:71px;color:#000">VDM Type</div><div class="bk" style="left:92px;top:18px;width:71px;line-height:16px;color:#000">Structured</div><div style="left:163px;top:0;width:1px;height:35px;background:#3a3a3a"></div><div class="bk" style="left:163px;top:0;width:58px;color:#000">Version</div><div class="bk" style="left:163px;top:18px;width:58px;line-height:16px;color:#000">1.0</div><div style="left:221px;top:0;width:1px;height:35px;background:#3a3a3a"></div><div class="bk" style="left:221px;top:0;width:68px;color:#000">Cmd Type</div><div class="bk" style="left:221px;top:18px;width:68px;line-height:16px;color:#000">ACK</div><div style="left:289px;top:0;width:1px;height:35px;background:#3a3a3a"></div><div class="bk" style="left:289px;top:0;width:80px;color:#000">Command</div><div class="bk" style="left:289px;top:18px;width:80px;line-height:16px;color:#000">DPConfigure</div></div><div style="left:0;top:1020px;width:1920px;height:20px;background:#f0f0f0"></div><div class="sf" style="left:2px;top:1022px;line-height:16px;font-size:12px">Ready</div><div style="left:0;top:1020px;width:1920px;height:1px;background:#d9d9d9"></div><div style="left:1495px;top:1022px;width:1px;height:16px;background:#d2d2d2"></div><div style="left:1702px;top:1022px;width:1px;height:16px;background:#d2d2d2"></div><div style="left:1751px;top:1022px;width:1px;height:16px;background:#d2d2d2"></div><div style="left:1801px;top:1022px;width:1px;height:16px;background:#d2d2d2"></div><div style="left:1881px;top:1022px;width:1px;height:16px;background:#d2d2d2"></div><div class="sf" style="left:1500px;top:1022px;line-height:16px;font-size:12.1px">SN: 1193-483101&nbsp; HW: 1.00&nbsp; FW: 1.11</div><div class="sf" style="left:1707px;top:1022px;line-height:16px;font-size:12px">USBPD</div><div class="sf" style="left:1885px;top:1022px;line-height:16px;font-size:12px">EN</div><div style="left:1147px;top:79px;width:773px;height:386px;background:#f0f0f0;border:1px solid #a0a0a0;border-top:none"></div><div style="left:1148px;top:79px;width:771px;height:16px;background:linear-gradient(#bbcde8,#e6eefa);border-bottom:1px solid #aaabad"></div><div class="sf" style="left:1152px;top:79px;line-height:15px;font-size:12px">Current/Voltage Monitor</div><svg style="left:1892px;top:82px" width="26" height="9" viewBox="0 0 26 9" fill="none" stroke="#1a1a1a"><path d="M2.700 .8h4.300v4.400" stroke-width="1.200"/><path d="M2.100 1.200h5.500" stroke-width="1.600"/><rect x=".6" y="3.100" width="4.500" height="4.400" stroke-width="1.200"/><path d="M0 3.300h5.700" stroke-width="1.600"/><path d="M16.600 1.400l6.200 5.400M22.800 1.400l-6.200 5.400" stroke-width="1.600"/></svg><div class="btn" style="left:1153px;top:100px;width:21px;height:20px"></div><div class="btn" style="left:1179px;top:100px;width:21px;height:20px"></div><div class="btn" style="left:1205px;top:100px;width:21px;height:20px"></div><div class="btn" style="left:1231px;top:100px;width:21px;height:20px"></div><div class="btn" style="left:1257px;top:100px;width:21px;height:20px"></div><div class="btn" style="left:1283px;top:100px;width:21px;height:20px"></div><svg style="left:1155px;top:102px" width="17" height="17" viewBox="0 0 17 17"><path d="M3 2.500h9.500v10l1.500 1v1.500H5.500l-1.500-1.500z" fill="#c4c4c4" stroke="#8f8f8f"/><path d="M3 2.500c-1.800 0-1.800 2.500 0 2.500h1" fill="#ddd" stroke="#8f8f8f"/><path d="M5.500 15c1.500 0 1.500-2 0-2h8" fill="none" stroke="#8f8f8f"/></svg><svg style="left:1182px;top:103px" width="15" height="15" viewBox="0 0 19 19" preserveAspectRatio="none"><rect x=".5" y=".5" width="18" height="18" rx="1" fill="#f7c948" stroke="#e0a820" stroke-width="1"/><rect x="3.500" y="1" width="12" height="8" fill="#ececec" stroke="#c9c9c9" stroke-width=".5"/><rect x="4" y="12" width="11" height="6.500" fill="#dfe3f5" opacity=".75"/><rect x="5.500" y="13.500" width="2.500" height="4" fill="#f7c948"/></svg><svg style="left:1207px;top:102px" width="17" height="17" viewBox="0 0 17 17"><path d="M4.800 11.200L1.500 14.500" stroke="#e08a30" stroke-width="1.800" stroke-linecap="round"/><circle cx="7.600" cy="8.300" r="3.700" fill="#dcebff" stroke="#9ab8f0" stroke-width="1"/><circle cx="7.600" cy="8.300" r="1.700" fill="#3a7be8"/><path d="M6 2h3.200L7.600 3.800zM6 14.500h3.200L7.600 12.700zM1 7l1.800 1.400L1 9.800zM14.500 7l-1.800 1.400 1.800 1.400z" fill="#1c3fc8"/></svg><svg style="left:1233px;top:102px" width="17" height="17" viewBox="0 0 17 17"><path d="M5 11.200L1.800 14.400" stroke="#e08a30" stroke-width="1.800" stroke-linecap="round"/><circle cx="7.800" cy="8.300" r="3.700" fill="#dcebff" stroke="#9ab8f0" stroke-width="1"/><circle cx="7.800" cy="8.300" r="1.700" fill="#3a7be8"/><path d="M1 2h3L1 5zM15 2h-3l3 3zM15 14.500h-3l3-3zM1 12.500v-1.500l1.500 1z" fill="#1c3fc8"/></svg><svg style="left:1259px;top:102px" width="17" height="17" viewBox="0 0 17 17"><path d="M4.500 0v15.800M0 6.500h16" stroke="#000" stroke-width="1"/><text x="11" y="5" font-family="Liberation Sans,sans-serif" font-size="6" text-anchor="middle" fill="#444">123</text></svg><svg style="left:1285px;top:102px" width="17" height="17" viewBox="0 0 17 17"><path d="M1.200 2v9M3 2v9" stroke="#e01010" stroke-width=".9"/><path d="M.2 3L1.200 1l1 2zM2 3l1-2 1 2zM.2 10l1 2 1-2zM2 10l1 2 1-2z" fill="#e01010"/><path d="M12.700 2v9M14.500 2v9" stroke="#3a3ae8" stroke-width=".9"/><path d="M11.700 3l1-2 1 2zM13.500 3l1-2 1 2zM11.700 10l1 2 1-2zM13.500 10l1 2 1-2z" fill="#3a3ae8"/><path d="M3.500 13.500h10" stroke="#000" stroke-width="2.400"/><path d="M4 13.500h9" stroke="#fff" stroke-width=".8"/><path d="M1.500 13.500l3-2v4zM16 13.500l-3-2v4z" fill="#000"/><text x="8" y="9.800" font-family="Liberation Sans,sans-serif" font-weight="bold" font-size="11" text-anchor="middle" fill="#000">?</text></svg><svg style="left:1147px;top:95px" width="773" height="370" viewBox="0 0 773 370" font-family="Liberation Serif,serif" font-size="12"><rect x="43" y="39" width="677" height="266" fill="#fff"/><rect x="43" y="39" width="676" height="2" fill="#9a9a9a"/><rect x="43" y="39" width="2" height="265" fill="#9a9a9a"/><rect x="176" y="41" width="1" height="262" fill="#bdbdbd"/><rect x="309" y="41" width="1" height="262" fill="#bdbdbd"/><rect x="442" y="41" width="1" height="262" fill="#bdbdbd"/><rect x="576" y="41" width="1" height="262" fill="#bdbdbd"/><rect x="709" y="41" width="1" height="262" fill="#bdbdbd"/><rect x="45" y="93" width="673" height="1" fill="#bdbdbd"/><rect x="45" y="145" width="673" height="1" fill="#bdbdbd"/><rect x="45" y="198" width="673" height="1" fill="#bdbdbd"/><rect x="45" y="250" width="673" height="1" fill="#bdbdbd"/><rect x="40" y="41" width="1" height="262" fill="#ff0000"/><rect x="32" y="41" width="8" height="1" fill="#ff0000"/><rect x="36" y="54" width="4" height="1" fill="#ff0000"/><rect x="34" y="67" width="6" height="1" fill="#ff0000"/><rect x="36" y="80" width="4" height="1" fill="#ff0000"/><rect x="32" y="93" width="8" height="1" fill="#ff0000"/><rect x="36" y="106" width="4" height="1" fill="#ff0000"/><rect x="34" y="119" width="6" height="1" fill="#ff0000"/><rect x="36" y="132" width="4" height="1" fill="#ff0000"/><rect x="32" y="145" width="8" height="1" fill="#ff0000"/><rect x="36" y="158" width="4" height="1" fill="#ff0000"/><rect x="34" y="171" width="6" height="1" fill="#ff0000"/><rect x="36" y="185" width="4" height="1" fill="#ff0000"/><rect x="32" y="198" width="8" height="1" fill="#ff0000"/><rect x="36" y="211" width="4" height="1" fill="#ff0000"/><rect x="34" y="224" width="6" height="1" fill="#ff0000"/><rect x="36" y="237" width="4" height="1" fill="#ff0000"/><rect x="32" y="250" width="8" height="1" fill="#ff0000"/><rect x="36" y="263" width="4" height="1" fill="#ff0000"/><rect x="34" y="276" width="6" height="1" fill="#ff0000"/><rect x="36" y="289" width="4" height="1" fill="#ff0000"/><rect x="32" y="302" width="8" height="1" fill="#ff0000"/><text transform="translate(26.5,46.1) scale(.85,1)" font-size="13.5" text-anchor="end" fill="#ff0000">10</text><text transform="translate(26.5,98.3) scale(.85,1)" font-size="13.5" text-anchor="end" fill="#ff0000">8</text><text transform="translate(26.5,150.5) scale(.85,1)" font-size="13.5" text-anchor="end" fill="#ff0000">6</text><text transform="translate(26.5,202.7) scale(.85,1)" font-size="13.5" text-anchor="end" fill="#ff0000">4</text><text transform="translate(26.5,254.9) scale(.85,1)" font-size="13.5" text-anchor="end" fill="#ff0000">2</text><text transform="translate(26.5,307.1) scale(.85,1)" font-size="13.5" text-anchor="end" fill="#ff0000">0</text><text transform="translate(10.299999999999955,170.5) rotate(-90)" text-anchor="middle" font-weight="bold" font-size="13" textLength="65" lengthAdjust="spacingAndGlyphs" fill="#ff0000">Voltage (V)</text><rect x="722" y="41" width="1" height="262" fill="#0000ff"/><rect x="722" y="41" width="9" height="1" fill="#0000ff"/><rect x="722" y="51" width="5" height="1" fill="#0000ff"/><rect x="722" y="61" width="7" height="1" fill="#0000ff"/><rect x="722" y="71" width="5" height="1" fill="#0000ff"/><rect x="722" y="81" width="9" height="1" fill="#0000ff"/><rect x="722" y="91" width="5" height="1" fill="#0000ff"/><rect x="722" y="101" width="7" height="1" fill="#0000ff"/><rect x="722" y="111" width="5" height="1" fill="#0000ff"/><rect x="722" y="121" width="9" height="1" fill="#0000ff"/><rect x="722" y="131" width="5" height="1" fill="#0000ff"/><rect x="722" y="141" width="7" height="1" fill="#0000ff"/><rect x="722" y="151" width="5" height="1" fill="#0000ff"/><rect x="722" y="161" width="9" height="1" fill="#0000ff"/><rect x="722" y="171" width="5" height="1" fill="#0000ff"/><rect x="722" y="181" width="7" height="1" fill="#0000ff"/><rect x="722" y="191" width="5" height="1" fill="#0000ff"/><rect x="722" y="201" width="9" height="1" fill="#0000ff"/><rect x="722" y="212" width="5" height="1" fill="#0000ff"/><rect x="722" y="222" width="7" height="1" fill="#0000ff"/><rect x="722" y="232" width="5" height="1" fill="#0000ff"/><rect x="722" y="242" width="9" height="1" fill="#0000ff"/><rect x="722" y="252" width="5" height="1" fill="#0000ff"/><rect x="722" y="262" width="7" height="1" fill="#0000ff"/><rect x="722" y="272" width="5" height="1" fill="#0000ff"/><rect x="722" y="282" width="9" height="1" fill="#0000ff"/><rect x="722" y="292" width="5" height="1" fill="#0000ff"/><rect x="722" y="302" width="7" height="1" fill="#0000ff"/><text transform="translate(734.3,45.5) scale(.85,1)" font-size="13.5" fill="#0000ff">600</text><text transform="translate(734.3,85.6) scale(.85,1)" font-size="13.5" fill="#0000ff">400</text><text transform="translate(734.3,125.7) scale(.85,1)" font-size="13.5" fill="#0000ff">200</text><text transform="translate(734.3,165.9) scale(.85,1)" font-size="13.5" fill="#0000ff">0</text><text transform="translate(734.3,206.0) scale(.85,1)" font-size="13.5" fill="#0000ff">-200</text><text transform="translate(734.3,246.1) scale(.85,1)" font-size="13.5" fill="#0000ff">-400</text><text transform="translate(734.3,286.2) scale(.85,1)" font-size="13.5" fill="#0000ff">-600</text><text transform="translate(761.8,170.5) rotate(90)" text-anchor="middle" font-weight="bold" font-size="13" textLength="75" lengthAdjust="spacingAndGlyphs" fill="#0000ff">Current (mA)</text><rect x="45" y="307" width="672" height="1" fill="#000"/><rect x="69" y="307" width="1" height="5" fill="#000"/><rect x="96" y="307" width="1" height="5" fill="#000"/><rect x="123" y="307" width="1" height="5" fill="#000"/><rect x="149" y="307" width="1" height="5" fill="#000"/><rect x="176" y="307" width="1" height="9" fill="#000"/><rect x="203" y="307" width="1" height="5" fill="#000"/><rect x="229" y="307" width="1" height="5" fill="#000"/><rect x="256" y="307" width="1" height="5" fill="#000"/><rect x="283" y="307" width="1" height="5" fill="#000"/><rect x="309" y="307" width="1" height="9" fill="#000"/><rect x="336" y="307" width="1" height="5" fill="#000"/><rect x="363" y="307" width="1" height="5" fill="#000"/><rect x="389" y="307" width="1" height="5" fill="#000"/><rect x="416" y="307" width="1" height="5" fill="#000"/><rect x="443" y="307" width="1" height="9" fill="#000"/><rect x="469" y="307" width="1" height="5" fill="#000"/><rect x="496" y="307" width="1" height="5" fill="#000"/><rect x="522" y="307" width="1" height="5" fill="#000"/><rect x="549" y="307" width="1" height="5" fill="#000"/><rect x="576" y="307" width="1" height="9" fill="#000"/><rect x="602" y="307" width="1" height="5" fill="#000"/><rect x="629" y="307" width="1" height="5" fill="#000"/><rect x="656" y="307" width="1" height="5" fill="#000"/><rect x="682" y="307" width="1" height="5" fill="#000"/><rect x="709" y="307" width="1" height="9" fill="#000"/><text transform="translate(175.7,329.6) scale(.85,1)" font-size="13.5" text-anchor="middle" fill="#000">0:05</text><text transform="translate(309.0,329.6) scale(.85,1)" font-size="13.5" text-anchor="middle" fill="#000">0:10</text><text transform="translate(442.2,329.6) scale(.85,1)" font-size="13.5" text-anchor="middle" fill="#000">0:15</text><text transform="translate(575.5,329.6) scale(.85,1)" font-size="13.5" text-anchor="middle" fill="#000">0:20</text><text transform="translate(708.7,329.6) scale(.85,1)" font-size="13.5" text-anchor="middle" fill="#000">0:25</text><text x="381" y="343" text-anchor="middle" font-weight="bold" font-size="13" textLength="63" lengthAdjust="spacingAndGlyphs" fill="#000">Time (m:ss)</text><path d="M45.0 302.0 L139.0 302.0 L139.0 301.0 L143.0 301.0 L143.0 171.5 L150.0 171.5 L150.0 175.0 L181.5 175.0 L181.5 173.5 L189.0 173.5 L189.0 68.5 L191.0 68.5 L191.0 70.0 L238.5 70.0 L238.5 69.0 L500.0 69.0 L500.0 280.0 L501.0 285.0 L502.0 290.0 L503.0 294.0 L505.0 297.5 L507.0 300.0 L511.0 301.5 L534.0 301.5 L534.0 168.8 L537.0 168.8 L537.0 169.8 L539.0 169.8 L539.0 168.8 L544.0 168.8 L544.0 169.8 L546.0 169.8 L546.0 168.8 L551.0 168.8 L551.0 169.8 L553.0 169.8 L553.0 168.8 L556.0 168.8 L556.0 169.8 L558.0 169.8 L558.0 168.8 L562.0 168.8 L562.0 169.8 L564.0 169.8 L564.0 168.8 L569.0 168.8 L569.0 169.8 L571.0 169.8 L571.0 168.8 L575.0 168.8 L575.0 169.8 L577.0 169.8 L577.0 168.8 L577.0 169.8 L716.0 169.8" fill="none" stroke="#ff0000" stroke-width="2" stroke-linejoin="miter"/><path d="M45.0 302.0 L525.0 302.0 L525.0 298.0 L530.0 298.0 L530.0 164.5 L716.0 164.5" fill="none" stroke="#ff6600" stroke-width="2" stroke-linejoin="miter"/><path d="M45.0 161.2 L144.0 161.2 L144.0 162.8 L150.0 162.8 L150.0 261.0 L189.5 261.0 L189.5 241.0 L190.5 241.0 L190.5 257.0 L191.3 257.0 L191.3 240.5 L192.2 240.5 L192.2 291.0 L202.0 291.0 L202.0 290.0 L206.0 290.0 L206.0 291.0 L208.0 291.0 L208.0 290.0 L212.0 290.0 L212.0 291.0 L214.0 291.0 L214.0 290.0 L216.0 290.0 L216.0 291.0 L220.0 291.0 L220.0 290.0 L224.0 290.0 L224.0 291.0 L227.0 291.0 L227.0 290.0 L228.0 290.0 L228.0 291.0 L237.0 291.0 L237.0 290.0 L239.0 290.0 L239.0 291.0 L246.0 291.0 L246.0 290.0 L250.0 290.0 L250.0 291.0 L255.0 291.0 L255.0 290.0 L257.0 290.0 L257.0 291.0 L266.0 291.0 L266.0 290.0 L267.0 290.0 L267.0 291.0 L270.0 291.0 L270.0 290.0 L271.0 290.0 L271.0 291.0 L278.0 291.0 L278.0 290.0 L280.0 290.0 L280.0 291.0 L289.0 291.0 L289.0 290.0 L290.0 290.0 L290.0 291.0 L299.0 291.0 L299.0 290.0 L300.0 290.0 L300.0 291.0 L303.0 291.0 L303.0 290.0 L307.0 290.0 L307.0 291.0 L309.0 291.0 L309.0 290.0 L310.0 290.0 L310.0 291.0 L312.0 291.0 L312.0 290.0 L313.0 290.0 L313.0 291.0 L318.0 291.0 L318.0 290.0 L322.0 290.0 L322.0 291.0 L331.0 291.0 L331.0 290.0 L333.0 290.0 L333.0 291.0 L342.0 291.0 L342.0 290.0 L344.0 290.0 L344.0 291.0 L349.0 291.0 L349.0 290.0 L353.0 290.0 L353.0 291.0 L358.0 291.0 L358.0 290.0 L359.0 290.0 L359.0 291.0 L363.0 291.0 L363.0 290.0 L364.0 290.0 L364.0 291.0 L366.0 291.0 L366.0 290.0 L367.0 290.0 L367.0 291.0 L372.0 291.0 L372.0 290.0 L373.0 290.0 L373.0 291.0 L377.0 291.0 L377.0 290.0 L379.0 290.0 L379.0 291.0 L388.0 291.0 L388.0 290.0 L389.0 290.0 L389.0 291.0 L394.0 291.0 L394.0 290.0 L398.0 290.0 L398.0 291.0 L403.0 291.0 L403.0 290.0 L407.0 290.0 L407.0 291.0 L411.0 291.0 L411.0 290.0 L415.0 290.0 L415.0 291.0 L422.0 291.0 L422.0 290.0 L424.0 290.0 L424.0 291.0 L431.0 291.0 L431.0 290.0 L432.0 290.0 L432.0 291.0 L436.0 291.0 L436.0 290.0 L437.0 290.0 L437.0 291.0 L441.0 291.0 L441.0 290.0 L445.0 290.0 L445.0 291.0 L454.0 291.0 L454.0 290.0 L455.0 290.0 L455.0 291.0 L464.0 291.0 L464.0 290.0 L465.0 290.0 L465.0 291.0 L472.0 291.0 L472.0 290.0 L476.0 290.0 L476.0 291.0 L483.0 291.0 L483.0 290.0 L484.0 290.0 L484.0 291.0 L493.0 291.0 L493.0 290.0 L494.0 290.0 L494.0 291.0 L499.0 291.0 L499.0 161.2 L534.0 161.2 L534.0 138.0 L537.0 138.0 L537.0 133.0 L538.0 133.0 L538.0 146.0 L540.0 146.0 L540.0 133.0 L541.0 123.0 L542.0 123.0 L542.0 112.0 L543.0 112.0 L543.0 116.0 L571.0 116.0 L571.0 112.0 L572.0 112.0 L572.0 119.4 L575.0 119.4 L575.0 113.0 L578.0 113.0 L578.0 107.0 L580.0 107.0 L580.0 103.0 L583.0 103.0 L583.0 95.5 L584.0 95.5 L584.0 102.0 L598.5 102.0 L598.5 103.2 L611.5 103.2 L611.5 104.5 L613.5 104.5 L613.5 103.0 L615.5 103.0 L615.5 104.5 L616.7 106.7 L628.0 106.7 L628.0 105.7 L629.0 105.7 L629.0 106.7 L640.0 106.7 L640.0 105.7 L641.0 105.7 L641.0 106.7 L647.0 106.7 L647.0 105.7 L648.0 105.7 L648.0 106.7 L654.0 106.7 L654.0 105.7 L655.0 105.7 L655.0 106.7 L669.0 106.7 L669.0 105.7 L670.0 105.7 L670.0 106.7 L684.0 106.7 L684.0 105.7 L685.0 105.7 L685.0 106.7 L692.0 106.7 L692.0 103.5 L703.0 103.5 L703.0 102.5 L704.0 102.5 L704.0 103.5 L714.0 103.5 L714.0 102.3 L716.0 102.3 L716.0 104.5" fill="none" stroke="#0000ff" stroke-width="2" stroke-linejoin="miter"/><path d="M193.5 41V303" stroke="#008000" stroke-width="1" stroke-dasharray="3 2"/><rect x="43" y="350" width="676" height="18" fill="#f0f0f0"/><path d="M43.5 368V350.5H719" fill="none" stroke="#a0a0a0"/><path d="M43 367.5H718.5V350" fill="none" stroke="#fff"/><rect x="166" y="351" width="65" height="16" fill="#f0f0f0"/><path d="M167 367V352H231" fill="none" stroke="#6d6d6d" stroke-width="2"/><path d="M167 366.5H230.5V352" fill="none" stroke="#fff" stroke-width="1"/><rect x="171" y="358" width="9" height="2" fill="#ff0000"/><text x="184" y="362" font-size="9" fill="#555" textLength="44.4" lengthAdjust="spacingAndGlyphs">VBUS Voltage</text><rect x="238" y="351" width="66" height="16" fill="#f0f0f0"/><path d="M239 367V352H304" fill="none" stroke="#6d6d6d" stroke-width="2"/><path d="M239 366.5H303.5V352" fill="none" stroke="#fff" stroke-width="1"/><rect x="243" y="358" width="9" height="2" fill="#0000ff"/><text x="256.70000000000005" y="362" font-size="9" fill="#555" textLength="44.4" lengthAdjust="spacingAndGlyphs">VBUS Current</text><rect x="311" y="351" width="71" height="16" fill="#f0f0f0"/><path d="M312 367V352H382" fill="none" stroke="#6d6d6d" stroke-width="2"/><path d="M312 366.5H381.5V352" fill="none" stroke="#fff" stroke-width="1"/><rect x="316" y="358" width="9" height="2" fill="#ff6600"/><text x="329.5999999999999" y="362" font-size="9" fill="#555" textLength="49.6" lengthAdjust="spacingAndGlyphs">VCONN Voltage</text><rect x="394" y="358" width="9" height="2" fill="#cc33ff"/><text x="407.5999999999999" y="362" font-size="9" fill="#555" textLength="50.4" lengthAdjust="spacingAndGlyphs">VCONN Current</text><rect x="473" y="358" width="9" height="2" fill="#009933"/><text x="486" y="362" font-size="9" fill="#555" textLength="39.5" lengthAdjust="spacingAndGlyphs">CC1 Voltage</text><rect x="540" y="358" width="9" height="2" fill="#cc4400"/><text x="553" y="362" font-size="9" fill="#555" textLength="39.6" lengthAdjust="spacingAndGlyphs">CC2 Voltage</text></svg></body></html>
